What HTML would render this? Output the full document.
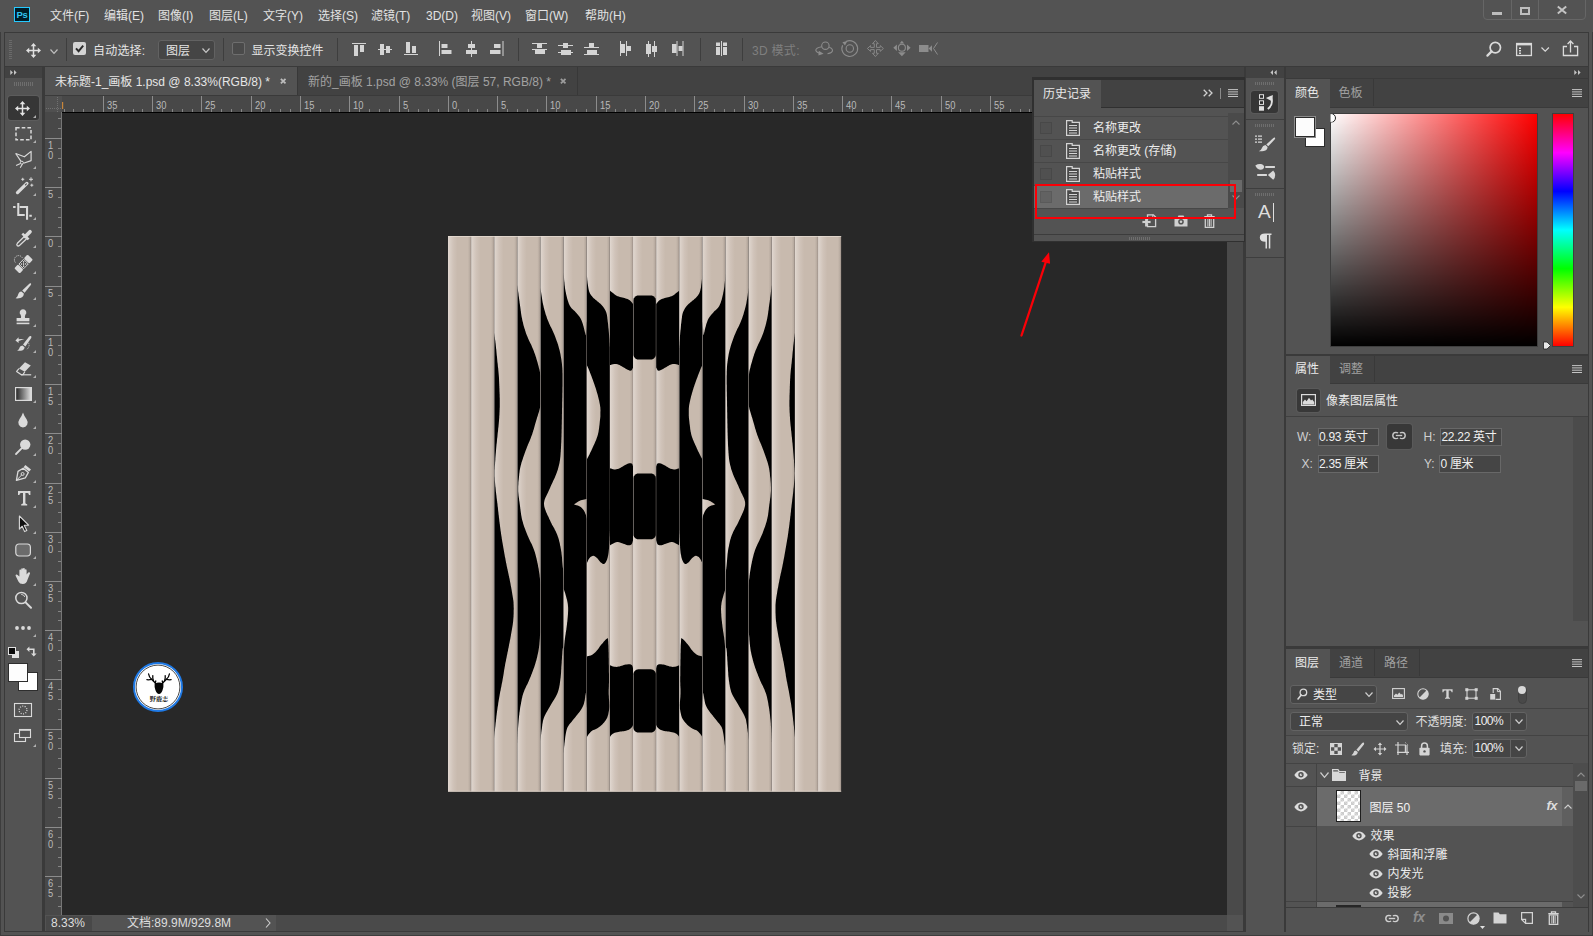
<!DOCTYPE html>
<html lang="zh-CN"><head><meta charset="utf-8"><title>Photoshop</title>
<style>
*{box-sizing:border-box;margin:0;padding:0}
html,body{width:1593px;height:936px;overflow:hidden}
body{position:relative;background:#3a3a3a;font-family:"Liberation Sans","Noto Sans CJK SC",sans-serif;font-size:12px;color:#dcdcdc;line-height:1}
.a{position:absolute}
.p{position:absolute;background:#535353}
.d{position:absolute;background:#424242}
.t{position:absolute;white-space:nowrap;line-height:16px;height:16px}
.dim{color:#9c9c9c}
svg{position:absolute;overflow:visible}
.ic{fill:#d6d6d6}
.st{fill:none;stroke:#d6d6d6;stroke-width:1.4}
</style></head>
<body>
<div class="p" style="left:0;top:0;width:1593px;height:936px;background:#535353"></div>
<div class="a" style="left:0;top:0;width:1px;height:936px;background:#3d3d3d"></div>
<div class="a" style="left:1592px;top:0;width:1px;height:936px;background:#3d3d3d"></div>
<div class="a" style="left:0;top:935px;width:1593px;height:1px;background:#3d3d3d"></div>
<svg style="left:0;top:0" width="6" height="6" viewBox="0 0 6 6"><path d="M0 0H5Q0 0 0 5Z" fill="#111"/></svg>
<svg style="left:1587px;top:0" width="6" height="6" viewBox="0 0 6 6"><path d="M6 0H1Q6 0 6 5Z" fill="#111"/></svg>
<div class="a" style="left:4.300px;top:32px;width:1584.700px;height:900.300px;background:#3a3a3a"></div>
<div class="a" id="menubar" style="left:0;top:0;width:1593px;height:32px;background:#535353"></div>
<div class="a" style="left:14px;top:7px;width:16px;height:15px;background:#001c26;border:1px solid #26c9ff;color:#31c5f0;font-size:9.5px;line-height:13px;text-align:center;font-weight:bold;letter-spacing:-0.3px">Ps</div>
<div class="t" style="left:50px;top:8px;color:#e2e2e2">文件(F)</div>
<div class="t" style="left:104px;top:8px;color:#e2e2e2">编辑(E)</div>
<div class="t" style="left:158px;top:8px;color:#e2e2e2">图像(I)</div>
<div class="t" style="left:209px;top:8px;color:#e2e2e2">图层(L)</div>
<div class="t" style="left:263px;top:8px;color:#e2e2e2">文字(Y)</div>
<div class="t" style="left:318px;top:8px;color:#e2e2e2">选择(S)</div>
<div class="t" style="left:371px;top:8px;color:#e2e2e2">滤镜(T)</div>
<div class="t" style="left:426px;top:8px;color:#e2e2e2">3D(D)</div>
<div class="t" style="left:471px;top:8px;color:#e2e2e2">视图(V)</div>
<div class="t" style="left:525px;top:8px;color:#e2e2e2">窗口(W)</div>
<div class="t" style="left:585px;top:8px;color:#e2e2e2">帮助(H)</div>
<div class="a" style="left:1483px;top:-4px;width:103px;height:24px;border:1px solid #666;border-radius:4px"></div>
<div class="a" style="left:1511px;top:0;width:1px;height:19px;background:#666"></div>
<div class="a" style="left:1538px;top:0;width:1px;height:19px;background:#666"></div>
<div class="a" style="left:1492px;top:12px;width:10px;height:3px;background:#bdbdbd"></div>
<div class="a" style="left:1520px;top:7px;width:10px;height:8px;border:2px solid #bdbdbd"></div>
<svg style="left:1557px;top:6px" width="10" height="8" viewBox="0 0 10 8"><path d="M0.8 0.5L9.2 7.5M9.2 0.5L0.8 7.5" stroke="#c4c4c4" stroke-width="2" fill="none"/></svg>
<div class="p" id="optbar" style="left:5px;top:33px;width:1583.300px;height:32.800px"></div>
<div class="a" style="left:9px;top:40px;width:3px;height:19px;background:repeating-linear-gradient(#6a6a6a 0 1px,transparent 1px 2px)"></div>
<svg style="left:26px;top:43px" width="15" height="15" viewBox="0 0 16 16"><path d="M8 0L11 3.4H8.8V7.2H12.6V5L16 8L12.6 11V8.8H8.8V12.6H11L8 16L5 12.6H7.2V8.8H3.4V11L0 8L3.4 5V7.2H7.2V3.4H5Z" fill="#e0e0e0"/></svg>
<svg style="left:49.5px;top:48.5px" width="8" height="5" viewBox="0 0 8 5"><path d="M0.5 0.5L4.0 4.3L7.5 0.5" stroke="#c0c0c0" stroke-width="1.2" fill="none"/></svg>
<div class="a" style="left:66px;top:38px;width:1px;height:23px;background:#3e3e3e"></div>
<div class="a" style="left:73px;top:42px;width:13px;height:13px;background:#d4d4d4;border-radius:2px"></div>
<svg style="left:73px;top:42px" width="13" height="13" viewBox="0 0 13 13"><path d="M3 6.3L5.6 9.2L10.2 3.6" stroke="#2a2a2a" stroke-width="1.9" fill="none"/></svg>
<div class="t" style="left:93px;top:43px;color:#e4e4e4;letter-spacing:0.2px">自动选择:</div>
<div class="a" style="left:157.500px;top:39.500px;width:57.500px;height:20.500px;background:#454545;border:1px solid #626262;border-radius:3px"></div>
<div class="t" style="left:166px;top:43px;color:#e4e4e4">图层</div>
<svg style="left:202px;top:48px" width="8" height="5" viewBox="0 0 8 5"><path d="M0.5 0.5L4.0 4.3L7.5 0.5" stroke="#c8c8c8" stroke-width="1.2" fill="none"/></svg>
<div class="a" style="left:223px;top:38px;width:1px;height:23px;background:#3e3e3e"></div>
<div class="a" style="left:232px;top:42px;width:13px;height:13px;background:#4a4a4a;border:1px solid #6e6e6e;border-radius:2px"></div>
<div class="t" style="left:251.500px;top:43px;color:#e4e4e4">显示变换控件</div>
<div class="a" style="left:337px;top:38px;width:1px;height:23px;background:#3e3e3e"></div>
<svg style="left:340px;top:33px" width="400" height="33" viewBox="0 0 400 33"><rect x="12" y="10" width="14" height="1" fill="#d4d4d4"/><rect x="14" y="12" width="4" height="11" fill="#d4d4d4"/><rect x="20" y="12" width="4" height="7" fill="#d4d4d4"/><rect x="38" y="16" width="14" height="1" fill="#d4d4d4"/><rect x="40" y="11" width="4" height="11" fill="#d4d4d4"/><rect x="46" y="13" width="4" height="7" fill="#d4d4d4"/><rect x="64" y="21" width="14" height="1" fill="#d4d4d4"/><rect x="66" y="9" width="4" height="11" fill="#d4d4d4"/><rect x="72" y="13" width="4" height="7" fill="#d4d4d4"/><rect x="99" y="8" width="1" height="15" fill="#d4d4d4"/><rect x="101.5" y="11" width="6" height="4" fill="#d4d4d4"/><rect x="101.5" y="17" width="10" height="4" fill="#d4d4d4"/><rect x="131" y="8" width="1" height="16" fill="#d4d4d4"/><rect x="128" y="11" width="7" height="4" fill="#d4d4d4"/><rect x="126" y="17" width="11" height="4" fill="#d4d4d4"/><rect x="162.5" y="8" width="1" height="15" fill="#d4d4d4"/><rect x="154" y="11" width="6.5" height="4" fill="#d4d4d4"/><rect x="150" y="17" width="10.5" height="4" fill="#d4d4d4"/><rect x="192" y="10" width="15" height="1" fill="#d4d4d4"/><rect x="197" y="11" width="5" height="4" fill="#d4d4d4"/><rect x="192" y="16" width="15" height="1" fill="#d4d4d4"/><rect x="195" y="17" width="10" height="4" fill="#d4d4d4"/><rect x="218" y="12" width="15" height="1" fill="#d4d4d4"/><rect x="223" y="10" width="5" height="5" fill="#d4d4d4"/><rect x="218" y="19" width="15" height="1" fill="#d4d4d4"/><rect x="221" y="17" width="10" height="5" fill="#d4d4d4"/><rect x="249" y="10" width="5" height="4" fill="#d4d4d4"/><rect x="244" y="14" width="15" height="1" fill="#d4d4d4"/><rect x="247" y="17" width="10" height="4" fill="#d4d4d4"/><rect x="244" y="21" width="15" height="1" fill="#d4d4d4"/><rect x="280" y="8" width="1" height="15" fill="#d4d4d4"/><rect x="281" y="11" width="4" height="9" fill="#d4d4d4"/><rect x="286" y="8" width="1" height="15" fill="#d4d4d4"/><rect x="287" y="13" width="4" height="5" fill="#d4d4d4"/><rect x="308" y="8" width="1" height="16" fill="#d4d4d4"/><rect x="306" y="11" width="5" height="10" fill="#d4d4d4"/><rect x="314" y="8" width="1" height="16" fill="#d4d4d4"/><rect x="312" y="13" width="5" height="6" fill="#d4d4d4"/><rect x="332" y="11" width="4.5" height="9" fill="#d4d4d4"/><rect x="336.5" y="8" width="1" height="15" fill="#d4d4d4"/><rect x="338.5" y="13" width="4" height="5" fill="#d4d4d4"/><rect x="342.5" y="8" width="1" height="15" fill="#d4d4d4"/><rect x="376" y="9.5" width="4" height="3.5" fill="#d4d4d4"/><rect x="376" y="14" width="4" height="8" fill="#d4d4d4"/><rect x="381" y="8" width="1" height="15" fill="#d4d4d4"/><rect x="383" y="9.5" width="4" height="3.5" fill="#d4d4d4"/><rect x="383" y="14" width="4" height="8" fill="#d4d4d4"/></svg>
<div class="a" style="left:518px;top:38px;width:1px;height:23px;background:#3e3e3e"></div>
<div class="a" style="left:699.500px;top:38px;width:1px;height:23px;background:#3e3e3e"></div>
<div class="a" style="left:742px;top:38px;width:1px;height:23px;background:#3e3e3e"></div>
<div class="t" style="left:752px;top:43px;color:#7f7f7f;letter-spacing:0.3px">3D 模式:</div>
<svg style="left:810px;top:38px" width="135" height="24" viewBox="0 0 135 24" fill="none" stroke="#8c8c8c" stroke-width="1.1"><circle cx="15.4" cy="7.7" r="3.7"/><path d="M17.500 15.700Q22.800 14.800 22.500 12Q22.200 10 19.200 9.200"/><path d="M11.700 8.800Q5.800 9.800 5.800 12.300Q6 14.200 9.500 15.200"/><path d="M8.800 12.800L13.600 15.800L8.400 17.400Z" fill="#8c8c8c" stroke="none"/><path d="M36 3.600A7.900 7.900 0 1 1 32.600 7.200"/><circle cx="39.800" cy="10.500" r="3.700"/><path d="M32.400 4.200L37.400 3L35 7.600Z" fill="#8c8c8c" stroke="none"/><path d="M65.400 2.500l2.900 3.200h-1.800v3.700h3.700v-1.800l3.200 2.900-3.200 2.900v-1.800h-3.700v3.700h1.800l-2.900 3.200-2.900-3.200h1.800v-3.700h-3.700v1.800l-3.200-2.900 3.200-2.900v1.800h3.700v-3.700h-1.800z" stroke-width="0.9"/><circle cx="91.900" cy="9.800" r="3.500"/><path d="M91.900 2.800l2.300 2.600h-4.600zM91.900 18.200l-3.800-4h7.600zM83.300 9.800l3.600-3.200v6.400zM100.600 9.800l-3.600-3.200v6.400z" fill="#8c8c8c" stroke="none"/><rect x="109" y="7" width="9.500" height="7" fill="#8c8c8c" stroke="none"/><path d="M118.500 10.500l3.500-3.200v6.400z" fill="#8c8c8c" stroke="none"/><path d="M127.500 4.500l-4 6 4 6" stroke-width="1"/></svg>
<svg style="left:1480px;top:36px" width="105" height="28" viewBox="0 0 105 28" fill="none" stroke="#dadada"><circle cx="15.3" cy="11.6" r="5.2" stroke-width="1.7"/><path d="M11.6 15.4L7.4 19.6" stroke-width="2.2" stroke-linecap="round"/><rect x="36.6" y="7.5" width="14.8" height="12" stroke-width="1.3"/><path d="M36.6 8.6h14.8" stroke-width="1.6"/><path d="M40 11.5v6.5" stroke-width="2" stroke-dasharray="1.5 1"/><path d="M61.5 11.5l3.7 3.6 3.7-3.6" stroke-width="1.2"/><path d="M87 10.5h-3.6v9h14.2v-9h-3.6" stroke-width="1.3"/><path d="M90.5 16.5V5.5M87.6 8l2.9-3 2.9 3" stroke-width="1.3"/></svg>
<div class="d" style="left:44.500px;top:67px;width:1199px;height:28px"></div>
<div class="p" style="left:44.500px;top:67px;width:252.500px;height:28px"></div>
<div class="t" style="left:55px;top:74px;color:#e6e6e6">未标题-1_画板 1.psd @ 8.33%(RGB/8) *</div>
<svg style="left:279.9px;top:77.9px" width="6.400" height="6.200" viewBox="0 0 8 8"><path d="M1 1L7 7M7 1L1 7" stroke="#bcbcbc" stroke-width="2.300" fill="none"/></svg>
<div class="a" style="left:297px;top:67px;width:1px;height:28px;background:#383838"></div>
<div class="t" style="left:308px;top:74px;color:#a2a2a2">新的_画板 1.psd @ 8.33% (图层 57, RGB/8) *</div>
<svg style="left:560.3px;top:77.9px" width="6.400" height="6.200" viewBox="0 0 8 8"><path d="M1 1L7 7M7 1L1 7" stroke="#9c9c9c" stroke-width="2.300" fill="none"/></svg>
<div class="a" style="left:577px;top:67px;width:1px;height:28px;background:#383838"></div>
<div class="a" style="left:45px;top:96px;width:1182px;height:16px;background:#484848"></div>
<div class="a" style="left:45px;top:96px;width:17px;height:819px;background:#484848;border-right:1px solid #757575"></div>
<div class="a" style="left:44.500px;top:96px;width:17.500px;height:16px;background:#505050"></div>
<svg style="left:0;top:0" width="1593" height="936" viewBox="0 0 1593 936"><rect x="64" y="109" width="1" height="3" fill="#858585"/><rect x="73" y="109" width="1" height="3" fill="#858585"/><rect x="83" y="109" width="1" height="3" fill="#858585"/><rect x="93" y="109" width="1" height="3" fill="#858585"/><rect x="103" y="96" width="1" height="16" fill="#8c8c8c"/><text x="107" y="109.200" font-size="10.300" textLength="10.4" lengthAdjust="spacingAndGlyphs" fill="#b9b9b9" font-family="Liberation Sans,sans-serif">35</text><rect x="113" y="109" width="1" height="3" fill="#858585"/><rect x="123" y="109" width="1" height="3" fill="#858585"/><rect x="133" y="109" width="1" height="3" fill="#858585"/><rect x="142" y="109" width="1" height="3" fill="#858585"/><rect x="152" y="96" width="1" height="16" fill="#8c8c8c"/><text x="156" y="109.200" font-size="10.300" textLength="10.4" lengthAdjust="spacingAndGlyphs" fill="#b9b9b9" font-family="Liberation Sans,sans-serif">30</text><rect x="162" y="109" width="1" height="3" fill="#858585"/><rect x="172" y="109" width="1" height="3" fill="#858585"/><rect x="182" y="109" width="1" height="3" fill="#858585"/><rect x="192" y="109" width="1" height="3" fill="#858585"/><rect x="201" y="96" width="1" height="16" fill="#8c8c8c"/><text x="205" y="109.200" font-size="10.300" textLength="10.4" lengthAdjust="spacingAndGlyphs" fill="#b9b9b9" font-family="Liberation Sans,sans-serif">25</text><rect x="211" y="109" width="1" height="3" fill="#858585"/><rect x="221" y="109" width="1" height="3" fill="#858585"/><rect x="231" y="109" width="1" height="3" fill="#858585"/><rect x="241" y="109" width="1" height="3" fill="#858585"/><rect x="251" y="96" width="1" height="16" fill="#8c8c8c"/><text x="255" y="109.200" font-size="10.300" textLength="10.4" lengthAdjust="spacingAndGlyphs" fill="#b9b9b9" font-family="Liberation Sans,sans-serif">20</text><rect x="261" y="109" width="1" height="3" fill="#858585"/><rect x="270" y="109" width="1" height="3" fill="#858585"/><rect x="280" y="109" width="1" height="3" fill="#858585"/><rect x="290" y="109" width="1" height="3" fill="#858585"/><rect x="300" y="96" width="1" height="16" fill="#8c8c8c"/><text x="304" y="109.200" font-size="10.300" textLength="10.4" lengthAdjust="spacingAndGlyphs" fill="#b9b9b9" font-family="Liberation Sans,sans-serif">15</text><rect x="310" y="109" width="1" height="3" fill="#858585"/><rect x="320" y="109" width="1" height="3" fill="#858585"/><rect x="330" y="109" width="1" height="3" fill="#858585"/><rect x="339" y="109" width="1" height="3" fill="#858585"/><rect x="349" y="96" width="1" height="16" fill="#8c8c8c"/><text x="353" y="109.200" font-size="10.300" textLength="10.4" lengthAdjust="spacingAndGlyphs" fill="#b9b9b9" font-family="Liberation Sans,sans-serif">10</text><rect x="359" y="109" width="1" height="3" fill="#858585"/><rect x="369" y="109" width="1" height="3" fill="#858585"/><rect x="379" y="109" width="1" height="3" fill="#858585"/><rect x="389" y="109" width="1" height="3" fill="#858585"/><rect x="399" y="96" width="1" height="16" fill="#8c8c8c"/><text x="403" y="109.200" font-size="10.300" textLength="5.2" lengthAdjust="spacingAndGlyphs" fill="#b9b9b9" font-family="Liberation Sans,sans-serif">5</text><rect x="408" y="109" width="1" height="3" fill="#858585"/><rect x="418" y="109" width="1" height="3" fill="#858585"/><rect x="428" y="109" width="1" height="3" fill="#858585"/><rect x="438" y="109" width="1" height="3" fill="#858585"/><rect x="448" y="96" width="1" height="16" fill="#8c8c8c"/><text x="452" y="109.200" font-size="10.300" textLength="5.2" lengthAdjust="spacingAndGlyphs" fill="#b9b9b9" font-family="Liberation Sans,sans-serif">0</text><rect x="458" y="109" width="1" height="3" fill="#858585"/><rect x="468" y="109" width="1" height="3" fill="#858585"/><rect x="477" y="109" width="1" height="3" fill="#858585"/><rect x="487" y="109" width="1" height="3" fill="#858585"/><rect x="497" y="96" width="1" height="16" fill="#8c8c8c"/><text x="501" y="109.200" font-size="10.300" textLength="5.2" lengthAdjust="spacingAndGlyphs" fill="#b9b9b9" font-family="Liberation Sans,sans-serif">5</text><rect x="507" y="109" width="1" height="3" fill="#858585"/><rect x="517" y="109" width="1" height="3" fill="#858585"/><rect x="527" y="109" width="1" height="3" fill="#858585"/><rect x="537" y="109" width="1" height="3" fill="#858585"/><rect x="546" y="96" width="1" height="16" fill="#8c8c8c"/><text x="550" y="109.200" font-size="10.300" textLength="10.4" lengthAdjust="spacingAndGlyphs" fill="#b9b9b9" font-family="Liberation Sans,sans-serif">10</text><rect x="556" y="109" width="1" height="3" fill="#858585"/><rect x="566" y="109" width="1" height="3" fill="#858585"/><rect x="576" y="109" width="1" height="3" fill="#858585"/><rect x="586" y="109" width="1" height="3" fill="#858585"/><rect x="596" y="96" width="1" height="16" fill="#8c8c8c"/><text x="600" y="109.200" font-size="10.300" textLength="10.4" lengthAdjust="spacingAndGlyphs" fill="#b9b9b9" font-family="Liberation Sans,sans-serif">15</text><rect x="606" y="109" width="1" height="3" fill="#858585"/><rect x="615" y="109" width="1" height="3" fill="#858585"/><rect x="625" y="109" width="1" height="3" fill="#858585"/><rect x="635" y="109" width="1" height="3" fill="#858585"/><rect x="645" y="96" width="1" height="16" fill="#8c8c8c"/><text x="649" y="109.200" font-size="10.300" textLength="10.4" lengthAdjust="spacingAndGlyphs" fill="#b9b9b9" font-family="Liberation Sans,sans-serif">20</text><rect x="655" y="109" width="1" height="3" fill="#858585"/><rect x="665" y="109" width="1" height="3" fill="#858585"/><rect x="675" y="109" width="1" height="3" fill="#858585"/><rect x="684" y="109" width="1" height="3" fill="#858585"/><rect x="694" y="96" width="1" height="16" fill="#8c8c8c"/><text x="698" y="109.200" font-size="10.300" textLength="10.4" lengthAdjust="spacingAndGlyphs" fill="#b9b9b9" font-family="Liberation Sans,sans-serif">25</text><rect x="704" y="109" width="1" height="3" fill="#858585"/><rect x="714" y="109" width="1" height="3" fill="#858585"/><rect x="724" y="109" width="1" height="3" fill="#858585"/><rect x="734" y="109" width="1" height="3" fill="#858585"/><rect x="744" y="96" width="1" height="16" fill="#8c8c8c"/><text x="748" y="109.200" font-size="10.300" textLength="10.4" lengthAdjust="spacingAndGlyphs" fill="#b9b9b9" font-family="Liberation Sans,sans-serif">30</text><rect x="753" y="109" width="1" height="3" fill="#858585"/><rect x="763" y="109" width="1" height="3" fill="#858585"/><rect x="773" y="109" width="1" height="3" fill="#858585"/><rect x="783" y="109" width="1" height="3" fill="#858585"/><rect x="793" y="96" width="1" height="16" fill="#8c8c8c"/><text x="797" y="109.200" font-size="10.300" textLength="10.4" lengthAdjust="spacingAndGlyphs" fill="#b9b9b9" font-family="Liberation Sans,sans-serif">35</text><rect x="803" y="109" width="1" height="3" fill="#858585"/><rect x="813" y="109" width="1" height="3" fill="#858585"/><rect x="822" y="109" width="1" height="3" fill="#858585"/><rect x="832" y="109" width="1" height="3" fill="#858585"/><rect x="842" y="96" width="1" height="16" fill="#8c8c8c"/><text x="846" y="109.200" font-size="10.300" textLength="10.4" lengthAdjust="spacingAndGlyphs" fill="#b9b9b9" font-family="Liberation Sans,sans-serif">40</text><rect x="852" y="109" width="1" height="3" fill="#858585"/><rect x="862" y="109" width="1" height="3" fill="#858585"/><rect x="872" y="109" width="1" height="3" fill="#858585"/><rect x="882" y="109" width="1" height="3" fill="#858585"/><rect x="891" y="96" width="1" height="16" fill="#8c8c8c"/><text x="895" y="109.200" font-size="10.300" textLength="10.4" lengthAdjust="spacingAndGlyphs" fill="#b9b9b9" font-family="Liberation Sans,sans-serif">45</text><rect x="901" y="109" width="1" height="3" fill="#858585"/><rect x="911" y="109" width="1" height="3" fill="#858585"/><rect x="921" y="109" width="1" height="3" fill="#858585"/><rect x="931" y="109" width="1" height="3" fill="#858585"/><rect x="941" y="96" width="1" height="16" fill="#8c8c8c"/><text x="945" y="109.200" font-size="10.300" textLength="10.4" lengthAdjust="spacingAndGlyphs" fill="#b9b9b9" font-family="Liberation Sans,sans-serif">50</text><rect x="951" y="109" width="1" height="3" fill="#858585"/><rect x="960" y="109" width="1" height="3" fill="#858585"/><rect x="970" y="109" width="1" height="3" fill="#858585"/><rect x="980" y="109" width="1" height="3" fill="#858585"/><rect x="990" y="96" width="1" height="16" fill="#8c8c8c"/><text x="994" y="109.200" font-size="10.300" textLength="10.4" lengthAdjust="spacingAndGlyphs" fill="#b9b9b9" font-family="Liberation Sans,sans-serif">55</text><rect x="1000" y="109" width="1" height="3" fill="#858585"/><rect x="1010" y="109" width="1" height="3" fill="#858585"/><rect x="1020" y="109" width="1" height="3" fill="#858585"/><rect x="1029" y="109" width="1" height="3" fill="#858585"/><rect x="1039" y="96" width="1" height="16" fill="#8c8c8c"/><text x="1043" y="109.200" font-size="10.300" textLength="10.4" lengthAdjust="spacingAndGlyphs" fill="#b9b9b9" font-family="Liberation Sans,sans-serif">60</text><rect x="1049" y="109" width="1" height="3" fill="#858585"/><rect x="1059" y="109" width="1" height="3" fill="#858585"/><rect x="1069" y="109" width="1" height="3" fill="#858585"/><rect x="1079" y="109" width="1" height="3" fill="#858585"/><rect x="1089" y="96" width="1" height="16" fill="#8c8c8c"/><text x="1093" y="109.200" font-size="10.300" textLength="10.4" lengthAdjust="spacingAndGlyphs" fill="#b9b9b9" font-family="Liberation Sans,sans-serif">65</text><rect x="1098" y="109" width="1" height="3" fill="#858585"/><rect x="1108" y="109" width="1" height="3" fill="#858585"/><rect x="1118" y="109" width="1" height="3" fill="#858585"/><rect x="1128" y="109" width="1" height="3" fill="#858585"/><rect x="1138" y="96" width="1" height="16" fill="#8c8c8c"/><text x="1142" y="109.200" font-size="10.300" textLength="10.4" lengthAdjust="spacingAndGlyphs" fill="#b9b9b9" font-family="Liberation Sans,sans-serif">70</text><rect x="1148" y="109" width="1" height="3" fill="#858585"/><rect x="1158" y="109" width="1" height="3" fill="#858585"/><rect x="1167" y="109" width="1" height="3" fill="#858585"/><rect x="1177" y="109" width="1" height="3" fill="#858585"/><rect x="1187" y="96" width="1" height="16" fill="#8c8c8c"/><text x="1191" y="109.200" font-size="10.300" textLength="10.4" lengthAdjust="spacingAndGlyphs" fill="#b9b9b9" font-family="Liberation Sans,sans-serif">75</text><rect x="1197" y="109" width="1" height="3" fill="#858585"/><rect x="1207" y="109" width="1" height="3" fill="#858585"/><rect x="1217" y="109" width="1" height="3" fill="#858585"/><rect x="58" y="118" width="3" height="1" fill="#858585"/><rect x="58" y="128" width="3" height="1" fill="#858585"/><rect x="45" y="138" width="17" height="1" fill="#8c8c8c"/><text x="48" y="149.2" font-size="10.300" textLength="5.200" lengthAdjust="spacingAndGlyphs" fill="#b9b9b9" font-family="Liberation Sans,sans-serif">1</text><text x="48" y="159.2" font-size="10.300" textLength="5.200" lengthAdjust="spacingAndGlyphs" fill="#b9b9b9" font-family="Liberation Sans,sans-serif">0</text><rect x="58" y="148" width="3" height="1" fill="#858585"/><rect x="58" y="158" width="3" height="1" fill="#858585"/><rect x="58" y="167" width="3" height="1" fill="#858585"/><rect x="58" y="177" width="3" height="1" fill="#858585"/><rect x="45" y="187" width="17" height="1" fill="#8c8c8c"/><text x="48" y="198.2" font-size="10.300" textLength="5.200" lengthAdjust="spacingAndGlyphs" fill="#b9b9b9" font-family="Liberation Sans,sans-serif">5</text><rect x="58" y="197" width="3" height="1" fill="#858585"/><rect x="58" y="207" width="3" height="1" fill="#858585"/><rect x="58" y="217" width="3" height="1" fill="#858585"/><rect x="58" y="227" width="3" height="1" fill="#858585"/><rect x="45" y="236" width="17" height="1" fill="#8c8c8c"/><text x="48" y="247.2" font-size="10.300" textLength="5.200" lengthAdjust="spacingAndGlyphs" fill="#b9b9b9" font-family="Liberation Sans,sans-serif">0</text><rect x="58" y="246" width="3" height="1" fill="#858585"/><rect x="58" y="256" width="3" height="1" fill="#858585"/><rect x="58" y="266" width="3" height="1" fill="#858585"/><rect x="58" y="276" width="3" height="1" fill="#858585"/><rect x="45" y="286" width="17" height="1" fill="#8c8c8c"/><text x="48" y="297.2" font-size="10.300" textLength="5.200" lengthAdjust="spacingAndGlyphs" fill="#b9b9b9" font-family="Liberation Sans,sans-serif">5</text><rect x="58" y="295" width="3" height="1" fill="#858585"/><rect x="58" y="305" width="3" height="1" fill="#858585"/><rect x="58" y="315" width="3" height="1" fill="#858585"/><rect x="58" y="325" width="3" height="1" fill="#858585"/><rect x="45" y="335" width="17" height="1" fill="#8c8c8c"/><text x="48" y="346.2" font-size="10.300" textLength="5.200" lengthAdjust="spacingAndGlyphs" fill="#b9b9b9" font-family="Liberation Sans,sans-serif">1</text><text x="48" y="356.2" font-size="10.300" textLength="5.200" lengthAdjust="spacingAndGlyphs" fill="#b9b9b9" font-family="Liberation Sans,sans-serif">0</text><rect x="58" y="345" width="3" height="1" fill="#858585"/><rect x="58" y="355" width="3" height="1" fill="#858585"/><rect x="58" y="364" width="3" height="1" fill="#858585"/><rect x="58" y="374" width="3" height="1" fill="#858585"/><rect x="45" y="384" width="17" height="1" fill="#8c8c8c"/><text x="48" y="395.2" font-size="10.300" textLength="5.200" lengthAdjust="spacingAndGlyphs" fill="#b9b9b9" font-family="Liberation Sans,sans-serif">1</text><text x="48" y="405.2" font-size="10.300" textLength="5.200" lengthAdjust="spacingAndGlyphs" fill="#b9b9b9" font-family="Liberation Sans,sans-serif">5</text><rect x="58" y="394" width="3" height="1" fill="#858585"/><rect x="58" y="404" width="3" height="1" fill="#858585"/><rect x="58" y="414" width="3" height="1" fill="#858585"/><rect x="58" y="423" width="3" height="1" fill="#858585"/><rect x="45" y="433" width="17" height="1" fill="#8c8c8c"/><text x="48" y="444.2" font-size="10.300" textLength="5.200" lengthAdjust="spacingAndGlyphs" fill="#b9b9b9" font-family="Liberation Sans,sans-serif">2</text><text x="48" y="454.2" font-size="10.300" textLength="5.200" lengthAdjust="spacingAndGlyphs" fill="#b9b9b9" font-family="Liberation Sans,sans-serif">0</text><rect x="58" y="443" width="3" height="1" fill="#858585"/><rect x="58" y="453" width="3" height="1" fill="#858585"/><rect x="58" y="463" width="3" height="1" fill="#858585"/><rect x="58" y="473" width="3" height="1" fill="#858585"/><rect x="45" y="483" width="17" height="1" fill="#8c8c8c"/><text x="48" y="494.2" font-size="10.300" textLength="5.200" lengthAdjust="spacingAndGlyphs" fill="#b9b9b9" font-family="Liberation Sans,sans-serif">2</text><text x="48" y="504.2" font-size="10.300" textLength="5.200" lengthAdjust="spacingAndGlyphs" fill="#b9b9b9" font-family="Liberation Sans,sans-serif">5</text><rect x="58" y="492" width="3" height="1" fill="#858585"/><rect x="58" y="502" width="3" height="1" fill="#858585"/><rect x="58" y="512" width="3" height="1" fill="#858585"/><rect x="58" y="522" width="3" height="1" fill="#858585"/><rect x="45" y="532" width="17" height="1" fill="#8c8c8c"/><text x="48" y="543.2" font-size="10.300" textLength="5.200" lengthAdjust="spacingAndGlyphs" fill="#b9b9b9" font-family="Liberation Sans,sans-serif">3</text><text x="48" y="553.2" font-size="10.300" textLength="5.200" lengthAdjust="spacingAndGlyphs" fill="#b9b9b9" font-family="Liberation Sans,sans-serif">0</text><rect x="58" y="542" width="3" height="1" fill="#858585"/><rect x="58" y="551" width="3" height="1" fill="#858585"/><rect x="58" y="561" width="3" height="1" fill="#858585"/><rect x="58" y="571" width="3" height="1" fill="#858585"/><rect x="45" y="581" width="17" height="1" fill="#8c8c8c"/><text x="48" y="592.2" font-size="10.300" textLength="5.200" lengthAdjust="spacingAndGlyphs" fill="#b9b9b9" font-family="Liberation Sans,sans-serif">3</text><text x="48" y="602.2" font-size="10.300" textLength="5.200" lengthAdjust="spacingAndGlyphs" fill="#b9b9b9" font-family="Liberation Sans,sans-serif">5</text><rect x="58" y="591" width="3" height="1" fill="#858585"/><rect x="58" y="601" width="3" height="1" fill="#858585"/><rect x="58" y="611" width="3" height="1" fill="#858585"/><rect x="58" y="620" width="3" height="1" fill="#858585"/><rect x="45" y="630" width="17" height="1" fill="#8c8c8c"/><text x="48" y="641.2" font-size="10.300" textLength="5.200" lengthAdjust="spacingAndGlyphs" fill="#b9b9b9" font-family="Liberation Sans,sans-serif">4</text><text x="48" y="651.2" font-size="10.300" textLength="5.200" lengthAdjust="spacingAndGlyphs" fill="#b9b9b9" font-family="Liberation Sans,sans-serif">0</text><rect x="58" y="640" width="3" height="1" fill="#858585"/><rect x="58" y="650" width="3" height="1" fill="#858585"/><rect x="58" y="660" width="3" height="1" fill="#858585"/><rect x="58" y="670" width="3" height="1" fill="#858585"/><rect x="45" y="679" width="17" height="1" fill="#8c8c8c"/><text x="48" y="690.2" font-size="10.300" textLength="5.200" lengthAdjust="spacingAndGlyphs" fill="#b9b9b9" font-family="Liberation Sans,sans-serif">4</text><text x="48" y="700.2" font-size="10.300" textLength="5.200" lengthAdjust="spacingAndGlyphs" fill="#b9b9b9" font-family="Liberation Sans,sans-serif">5</text><rect x="58" y="689" width="3" height="1" fill="#858585"/><rect x="58" y="699" width="3" height="1" fill="#858585"/><rect x="58" y="709" width="3" height="1" fill="#858585"/><rect x="58" y="719" width="3" height="1" fill="#858585"/><rect x="45" y="729" width="17" height="1" fill="#8c8c8c"/><text x="48" y="740.2" font-size="10.300" textLength="5.200" lengthAdjust="spacingAndGlyphs" fill="#b9b9b9" font-family="Liberation Sans,sans-serif">5</text><text x="48" y="750.2" font-size="10.300" textLength="5.200" lengthAdjust="spacingAndGlyphs" fill="#b9b9b9" font-family="Liberation Sans,sans-serif">0</text><rect x="58" y="738" width="3" height="1" fill="#858585"/><rect x="58" y="748" width="3" height="1" fill="#858585"/><rect x="58" y="758" width="3" height="1" fill="#858585"/><rect x="58" y="768" width="3" height="1" fill="#858585"/><rect x="45" y="778" width="17" height="1" fill="#8c8c8c"/><text x="48" y="789.2" font-size="10.300" textLength="5.200" lengthAdjust="spacingAndGlyphs" fill="#b9b9b9" font-family="Liberation Sans,sans-serif">5</text><text x="48" y="799.2" font-size="10.300" textLength="5.200" lengthAdjust="spacingAndGlyphs" fill="#b9b9b9" font-family="Liberation Sans,sans-serif">5</text><rect x="58" y="788" width="3" height="1" fill="#858585"/><rect x="58" y="798" width="3" height="1" fill="#858585"/><rect x="58" y="807" width="3" height="1" fill="#858585"/><rect x="58" y="817" width="3" height="1" fill="#858585"/><rect x="45" y="827" width="17" height="1" fill="#8c8c8c"/><text x="48" y="838.2" font-size="10.300" textLength="5.200" lengthAdjust="spacingAndGlyphs" fill="#b9b9b9" font-family="Liberation Sans,sans-serif">6</text><text x="48" y="848.2" font-size="10.300" textLength="5.200" lengthAdjust="spacingAndGlyphs" fill="#b9b9b9" font-family="Liberation Sans,sans-serif">0</text><rect x="58" y="837" width="3" height="1" fill="#858585"/><rect x="58" y="847" width="3" height="1" fill="#858585"/><rect x="58" y="857" width="3" height="1" fill="#858585"/><rect x="58" y="866" width="3" height="1" fill="#858585"/><rect x="45" y="876" width="17" height="1" fill="#8c8c8c"/><text x="48" y="887.2" font-size="10.300" textLength="5.200" lengthAdjust="spacingAndGlyphs" fill="#b9b9b9" font-family="Liberation Sans,sans-serif">6</text><text x="48" y="897.2" font-size="10.300" textLength="5.200" lengthAdjust="spacingAndGlyphs" fill="#b9b9b9" font-family="Liberation Sans,sans-serif">5</text><rect x="58" y="886" width="3" height="1" fill="#858585"/><rect x="58" y="896" width="3" height="1" fill="#858585"/><rect x="58" y="906" width="3" height="1" fill="#858585"/><path d="M46 108.5H61M57.500 97V112" stroke="#707070" stroke-width="1" stroke-dasharray="1 1" fill="none"/><rect x="62" y="102" width="1.2" height="7" fill="#c8853a"/></svg>
<div class="a" style="left:62px;top:112px;width:1165px;height:803px;background:#282828;border-top:1px solid #000"></div>
<div class="a" style="left:1227px;top:96px;width:16px;height:819px;background:#4a4a4a"></div>
<div class="a" style="left:45px;top:915px;width:1182px;height:16px;background:#4a4a4a"></div>
<div class="p" style="left:1227px;top:915px;width:16px;height:16px"></div>
<div class="p" style="left:45px;top:915px;width:231px;height:16px"></div>
<div class="a" style="left:46px;top:916px;width:46px;height:15px;background:#484848"></div>
<div class="t" style="left:51px;top:915px;color:#dedede">8.33%</div>
<div class="t" style="left:127px;top:915px;color:#dedede">文档:89.9M/929.8M</div>
<svg style="left:265px;top:918px" width="6" height="10" viewBox="0 0 6 10"><path d="M1 0.5L5 5L1 9.5" stroke="#cfcfcf" stroke-width="1.1" fill="none"/></svg>
<svg style="left:133px;top:662px" width="50" height="50" viewBox="0 0 50 50"><circle cx="25" cy="25" r="24" fill="#fff" stroke="#1f7ae6" stroke-width="2"/><circle cx="25" cy="25" r="21.900" fill="none" stroke="#1a1a1a" stroke-width="0.800"/><g fill="none" stroke="#050505" stroke-width="1.300" stroke-linecap="round"><path d="M22.800 21.600Q20 18.500 18.600 17.200Q16 15 15.600 12"/><path d="M18.800 17.400Q16 18 13.900 17.700"/><path d="M20.500 18.900Q19.400 16.400 19.800 13.600"/><path d="M22.300 21Q22.200 19.800 22.800 19"/><path d="M29.200 21.600Q32 18.500 33.400 17.200Q36 15 36.400 12"/><path d="M33.200 17.400Q36 18 38.100 17.700"/><path d="M31.500 18.900Q32.600 16.400 32.200 13.600"/><path d="M29.700 21Q29.800 19.800 29.200 19"/></g><path d="M21.600 21.800Q23.600 20.600 26 20.600Q28.400 20.600 30.400 21.800Q30.800 24.500 29.600 28Q28.200 31.900 26 31.900Q23.800 31.900 22.400 28Q21.200 24.500 21.600 21.800Z" fill="#050505"/><text x="26" y="39.300" font-size="6.200" text-anchor="middle" fill="#111" font-weight="700" font-family="'Liberation Serif','Noto Serif CJK SC',serif">野鹿志</text></svg>
<svg class="art" width="393.2" height="555.8" viewBox="0 0 393.2 555.8" style="position:absolute;left:447.9px;top:236.0px">
<defs>
<linearGradient id="sg" gradientUnits="userSpaceOnUse" x1="0" y1="0" x2="23.13" y2="0"><stop offset="0" stop-color="#e3dad3"/><stop offset="0.04" stop-color="#ddd3cb"/><stop offset="0.22" stop-color="#d0c3b9"/><stop offset="0.40" stop-color="#c8baae"/><stop offset="0.86" stop-color="#c8baae"/><stop offset="0.94" stop-color="#b9aca1"/><stop offset="1" stop-color="#9d9088"/></linearGradient>
<clipPath id="sc"><rect x="0" y="0" width="23.13" height="555.8"/></clipPath>
</defs>
<g transform="translate(0.00,0)" clip-path="url(#sc)">
<rect x="-0.5" y="0" width="24.13" height="555.8" fill="url(#sg)"/>
</g>
<g transform="translate(23.13,0)" clip-path="url(#sc)">
<rect x="-0.5" y="0" width="24.13" height="555.8" fill="url(#sg)"/>
</g>
<g transform="translate(46.26,0)" clip-path="url(#sc)">
<rect x="-0.5" y="0" width="24.13" height="555.8" fill="url(#sg)"/>
<polygon points="0.0,97.0 0.0,97.0 0.1,97.6 0.2,98.4 0.3,99.3 0.4,100.4 0.6,101.5 0.7,102.7 0.9,103.9 1.1,105.2 1.2,106.5 1.4,107.8 1.5,109.0 1.6,110.1 1.7,111.1 1.8,112.3 2.0,113.4 2.1,114.6 2.2,115.7 2.3,116.9 2.4,118.1 2.5,119.3 2.7,120.5 2.8,121.7 2.9,122.8 3.0,124.0 3.1,125.2 3.2,126.3 3.4,127.5 3.5,128.6 3.6,129.8 3.7,130.9 3.9,132.1 4.0,133.2 4.1,134.4 4.2,135.5 4.3,136.7 4.4,137.8 4.5,139.0 4.6,140.2 4.7,141.3 4.7,142.5 4.8,143.6 4.8,144.8 4.9,145.9 4.9,147.1 5.0,148.2 5.0,149.4 5.1,150.5 5.1,151.7 5.2,152.8 5.2,154.0 5.2,155.2 5.3,156.3 5.3,157.5 5.4,158.6 5.4,159.8 5.4,160.9 5.5,162.1 5.5,163.2 5.5,164.4 5.5,165.5 5.5,166.7 5.5,167.8 5.5,169.0 5.5,170.2 5.5,171.3 5.4,172.5 5.4,173.6 5.3,174.8 5.3,175.9 5.2,177.1 5.2,178.2 5.1,179.4 5.0,180.5 5.0,181.7 4.9,182.8 4.8,184.0 4.7,185.2 4.6,186.3 4.5,187.5 4.4,188.6 4.3,189.8 4.2,190.9 4.0,192.1 3.9,193.2 3.8,194.4 3.7,195.5 3.5,196.7 3.4,197.8 3.3,199.0 3.2,200.2 3.1,201.3 2.9,202.5 2.8,203.6 2.7,204.8 2.6,205.9 2.5,207.1 2.3,208.2 2.2,209.4 2.1,210.5 2.0,211.7 1.9,212.8 1.8,214.0 1.7,215.2 1.6,216.4 1.5,217.6 1.4,218.8 1.3,220.0 1.2,221.2 1.1,222.4 1.1,223.6 1.0,224.8 0.9,225.9 0.8,227.0 0.8,228.0 0.7,229.0 0.6,230.3 0.5,231.5 0.5,232.5 0.4,233.5 0.3,234.5 0.3,235.5 0.3,236.5 0.3,237.7 0.3,239.0 0.3,240.0 0.4,241.0 0.5,242.1 0.5,243.2 0.6,244.4 0.7,245.6 0.8,246.8 0.9,248.0 1.0,249.2 1.1,250.4 1.3,251.6 1.4,252.8 1.5,254.0 1.6,255.2 1.7,256.3 1.9,257.5 2.0,258.6 2.2,259.8 2.3,260.9 2.4,262.1 2.6,263.2 2.7,264.4 2.9,265.5 3.0,266.7 3.2,267.8 3.3,269.0 3.4,270.2 3.6,271.3 3.7,272.5 3.8,273.6 3.9,274.8 4.1,275.9 4.2,277.1 4.3,278.2 4.5,279.4 4.6,280.5 4.7,281.7 4.9,282.8 5.0,284.0 5.1,285.2 5.3,286.3 5.4,287.5 5.6,288.6 5.7,289.8 5.9,290.9 6.0,292.1 6.2,293.2 6.3,294.4 6.5,295.5 6.7,296.7 6.8,297.8 7.0,299.0 7.2,300.2 7.4,301.3 7.5,302.5 7.7,303.6 7.9,304.8 8.1,305.9 8.3,307.1 8.5,308.2 8.7,309.4 8.9,310.5 9.1,311.7 9.3,312.8 9.5,314.0 9.7,315.2 9.9,316.3 10.1,317.5 10.3,318.6 10.5,319.8 10.7,320.9 11.0,322.1 11.2,323.2 11.4,324.4 11.6,325.5 11.8,326.7 12.1,327.8 12.3,329.0 12.5,330.2 12.8,331.3 13.0,332.5 13.3,333.6 13.5,334.8 13.8,335.9 14.0,337.1 14.3,338.2 14.5,339.4 14.8,340.5 15.0,341.7 15.3,342.8 15.5,344.0 15.7,345.2 16.0,346.4 16.2,347.6 16.4,348.8 16.6,350.0 16.9,351.2 17.1,352.4 17.3,353.6 17.5,354.8 17.7,355.9 17.9,357.0 18.0,358.0 18.2,359.0 18.4,360.3 18.6,361.5 18.8,362.5 18.9,363.5 19.1,364.5 19.2,365.5 19.3,366.5 19.3,367.7 19.4,369.0 19.4,370.0 19.4,371.0 19.5,372.1 19.5,373.2 19.4,374.4 19.4,375.6 19.4,376.8 19.4,378.0 19.3,379.2 19.3,380.4 19.2,381.6 19.1,382.8 19.0,384.0 18.9,385.2 18.8,386.3 18.6,387.5 18.5,388.6 18.3,389.8 18.1,390.9 17.9,392.1 17.7,393.2 17.5,394.4 17.3,395.5 17.1,396.7 16.9,397.8 16.7,399.0 16.5,400.2 16.3,401.3 16.1,402.5 15.9,403.6 15.6,404.8 15.4,405.9 15.2,407.1 14.9,408.2 14.7,409.4 14.5,410.5 14.3,411.7 14.0,412.8 13.8,414.0 13.6,415.2 13.3,416.3 13.1,417.5 12.9,418.6 12.6,419.8 12.4,420.9 12.2,422.1 11.9,423.2 11.7,424.4 11.5,425.5 11.2,426.7 11.0,427.8 10.8,429.0 10.6,430.2 10.4,431.3 10.2,432.5 10.0,433.6 9.8,434.8 9.6,435.9 9.5,437.1 9.3,438.2 9.1,439.4 8.9,440.5 8.7,441.7 8.5,442.8 8.3,444.0 8.1,445.2 7.9,446.3 7.6,447.5 7.4,448.6 7.2,449.8 7.0,450.9 6.7,452.1 6.5,453.2 6.3,454.4 6.0,455.5 5.8,456.7 5.6,457.8 5.4,459.0 5.2,460.2 5.0,461.3 4.8,462.5 4.6,463.6 4.4,464.8 4.2,465.9 4.0,467.1 3.9,468.2 3.7,469.4 3.5,470.5 3.3,471.7 3.2,472.8 3.0,474.0 2.8,475.2 2.7,476.3 2.5,477.5 2.4,478.7 2.2,479.9 2.1,481.0 2.0,482.2 1.8,483.4 1.7,484.5 1.6,485.7 1.4,486.8 1.3,487.9 1.2,489.0 1.1,490.3 0.9,491.7 0.8,493.0 0.7,494.4 0.5,495.8 0.4,497.1 0.3,498.3 0.2,499.4 0.1,500.5 0.1,501.3 0.0,502.0 0.0,502.0" fill="#000"/>
</g>
<g transform="translate(69.39,0)" clip-path="url(#sc)">
<rect x="-0.5" y="0" width="24.13" height="555.8" fill="url(#sg)"/>
<polygon points="0.0,49.0 0.0,49.0 0.1,49.7 0.2,50.6 0.3,51.6 0.4,52.8 0.6,54.0 0.7,55.3 0.9,56.6 1.1,57.8 1.2,59.0 1.3,60.1 1.5,61.1 1.6,62.1 1.8,63.2 1.9,64.2 2.1,65.3 2.2,66.4 2.4,67.7 2.6,69.0 2.7,70.0 2.9,71.0 3.0,72.1 3.2,73.2 3.3,74.4 3.5,75.6 3.6,76.8 3.8,78.0 4.0,79.2 4.2,80.4 4.4,81.6 4.7,82.8 4.9,84.0 5.1,85.1 5.4,86.1 5.7,87.2 5.9,88.3 6.2,89.4 6.5,90.4 6.8,91.5 7.1,92.6 7.5,93.6 7.8,94.7 8.2,95.8 8.5,96.9 8.9,97.9 9.3,99.0 9.7,100.1 10.2,101.1 10.6,102.2 11.1,103.3 11.6,104.4 12.1,105.4 12.6,106.5 13.1,107.6 13.7,108.6 14.2,109.7 14.6,110.8 15.1,111.9 15.6,112.9 16.0,114.0 16.4,115.1 16.8,116.2 17.2,117.3 17.6,118.3 18.0,119.4 18.3,120.5 18.7,121.6 19.0,122.7 19.3,123.8 19.7,124.9 20.0,125.9 20.3,127.0 20.5,128.0 20.8,129.0 21.1,130.1 21.4,131.2 21.6,132.2 21.9,133.1 22.1,134.1 22.3,135.1 22.5,136.0 22.7,137.1 22.8,138.2 23.0,139.3 23.1,140.6 23.1,142.0 23.1,143.0 23.1,144.0 23.1,145.1 23.1,146.3 23.1,147.5 23.1,148.8 23.1,150.0 23.1,151.3 23.1,152.7 23.1,154.0 23.1,155.3 23.1,156.5 23.1,157.8 23.1,159.0 23.1,160.1 23.1,161.2 23.1,162.2 23.1,163.2 23.1,164.0 23.1,165.8 23.1,167.2 23.1,168.2 23.0,169.0 22.9,169.8 22.8,170.8 22.5,172.0 22.3,172.9 22.0,173.9 21.8,174.9 21.5,175.9 21.2,177.0 20.8,178.1 20.5,179.2 20.1,180.4 19.7,181.6 19.4,182.8 19.0,184.0 18.7,185.0 18.4,186.0 18.1,187.0 17.8,188.1 17.5,189.1 17.2,190.2 16.9,191.3 16.6,192.4 16.3,193.5 15.9,194.6 15.6,195.7 15.2,196.8 14.9,197.9 14.5,199.0 14.1,200.1 13.7,201.1 13.3,202.2 12.9,203.3 12.4,204.4 12.0,205.4 11.5,206.5 11.1,207.6 10.6,208.6 10.2,209.7 9.7,210.8 9.3,211.9 8.9,212.9 8.5,214.0 8.1,215.1 7.7,216.2 7.3,217.3 6.9,218.4 6.5,219.6 6.1,220.7 5.7,221.8 5.4,222.9 5.0,224.0 4.7,225.1 4.3,226.1 4.0,227.1 3.8,228.1 3.5,229.0 3.2,230.3 2.9,231.5 2.7,232.5 2.5,233.5 2.3,234.5 2.2,235.5 2.1,236.5 1.9,237.7 1.8,239.0 1.7,240.0 1.6,241.0 1.5,242.1 1.4,243.2 1.2,244.4 1.1,245.6 1.0,246.8 1.0,248.0 0.9,249.2 0.8,250.4 0.8,251.6 0.8,252.8 0.8,254.0 0.8,255.2 0.9,256.3 1.0,257.5 1.1,258.6 1.2,259.8 1.4,260.9 1.5,262.1 1.7,263.2 1.8,264.4 2.0,265.5 2.2,266.7 2.3,267.8 2.5,269.0 2.6,270.2 2.8,271.3 2.9,272.5 3.1,273.6 3.2,274.8 3.4,275.9 3.5,277.1 3.7,278.2 3.9,279.4 4.1,280.5 4.3,281.7 4.5,282.8 4.8,284.0 5.1,285.1 5.4,286.1 5.7,287.2 6.0,288.3 6.4,289.4 6.7,290.4 7.1,291.5 7.5,292.6 7.9,293.6 8.3,294.7 8.7,295.8 9.2,296.9 9.6,297.9 10.0,299.0 10.4,300.1 10.9,301.1 11.4,302.2 11.9,303.3 12.4,304.4 12.9,305.4 13.4,306.5 14.0,307.6 14.5,308.6 15.0,309.7 15.4,310.8 15.9,311.9 16.3,312.9 16.7,314.0 17.1,315.2 17.5,316.3 17.8,317.5 18.1,318.6 18.4,319.8 18.7,320.9 19.0,322.1 19.3,323.2 19.5,324.4 19.8,325.5 20.0,326.7 20.3,327.8 20.5,329.0 20.7,330.2 20.9,331.3 21.2,332.5 21.4,333.7 21.5,334.9 21.7,336.1 21.9,337.3 22.1,338.4 22.2,339.6 22.3,340.7 22.5,341.9 22.6,342.9 22.7,344.0 22.8,345.1 22.9,346.0 23.0,346.8 23.0,347.6 23.1,348.3 23.1,349.1 23.1,350.0 23.1,351.1 23.1,352.4 23.1,354.0 23.1,356.0 23.1,356.8 23.1,357.7 23.1,358.7 23.1,359.7 23.1,360.8 23.1,361.9 23.1,363.1 23.1,364.3 23.1,365.6 23.1,366.9 23.1,368.2 23.1,369.5 23.1,370.9 23.1,372.3 23.1,373.6 23.1,375.0 23.1,376.4 23.1,377.7 23.1,379.1 23.1,380.4 23.1,381.7 23.1,383.0 23.1,384.2 23.1,385.4 23.1,386.5 23.1,387.6 23.1,388.6 23.1,389.6 23.1,390.4 23.1,391.3 23.1,392.0 23.1,394.8 23.1,396.2 23.0,396.8 23.0,397.1 22.8,397.7 22.7,399.0 22.6,399.9 22.5,400.9 22.5,401.9 22.4,403.0 22.3,404.2 22.2,405.4 22.1,406.6 22.0,407.9 21.9,409.1 21.7,410.4 21.6,411.6 21.4,412.8 21.2,414.0 21.0,415.2 20.8,416.3 20.5,417.5 20.3,418.6 20.0,419.8 19.8,420.9 19.5,422.1 19.2,423.2 18.9,424.4 18.5,425.5 18.2,426.7 17.9,427.8 17.5,429.0 17.2,430.1 16.8,431.2 16.4,432.3 16.0,433.3 15.6,434.4 15.2,435.5 14.8,436.6 14.4,437.7 13.9,438.8 13.5,439.9 13.1,440.9 12.6,442.0 12.2,443.0 11.8,444.0 11.3,445.2 10.8,446.3 10.3,447.4 9.8,448.5 9.2,449.6 8.7,450.6 8.2,451.7 7.7,452.7 7.2,453.8 6.8,454.9 6.4,455.9 6.0,457.0 5.7,458.1 5.3,459.2 5.0,460.3 4.8,461.4 4.5,462.5 4.3,463.6 4.1,464.7 3.9,465.7 3.7,466.8 3.5,467.9 3.3,469.0 3.1,470.0 2.9,471.1 2.7,472.2 2.6,473.3 2.4,474.4 2.3,475.5 2.1,476.5 2.0,477.6 1.9,478.7 1.7,479.8 1.6,480.9 1.5,482.0 1.4,483.1 1.3,484.3 1.2,485.5 1.1,486.7 1.0,487.8 0.9,489.0 0.8,490.2 0.7,491.4 0.6,492.6 0.6,493.8 0.5,495.0 0.4,496.2 0.4,497.5 0.3,498.9 0.3,500.3 0.2,501.6 0.2,503.0 0.1,504.2 0.1,505.4 0.1,506.4 0.0,507.3 0.0,508.0 0.0,508.0" fill="#000"/>
</g>
<g transform="translate(92.52,0)" clip-path="url(#sc)">
<rect x="-0.5" y="0" width="24.13" height="555.8" fill="url(#sg)"/>
<polygon points="0.0,52.0 0.0,52.0 0.1,52.6 0.2,53.4 0.3,54.3 0.5,55.4 0.6,56.5 0.8,57.7 1.0,58.9 1.2,60.2 1.4,61.5 1.6,62.9 1.8,64.2 2.0,65.5 2.2,66.7 2.5,67.9 2.7,69.0 3.0,70.1 3.2,71.2 3.5,72.3 3.8,73.4 4.1,74.5 4.4,75.6 4.7,76.6 5.0,77.7 5.3,78.7 5.7,79.8 6.1,80.8 6.4,81.9 6.8,82.9 7.2,84.0 7.6,85.1 8.1,86.1 8.5,87.2 9.0,88.3 9.5,89.4 10.0,90.4 10.6,91.5 11.1,92.6 11.6,93.6 12.1,94.7 12.6,95.8 13.1,96.9 13.6,97.9 14.0,99.0 14.4,100.1 14.8,101.1 15.2,102.2 15.6,103.3 16.0,104.4 16.4,105.4 16.8,106.5 17.1,107.6 17.5,108.6 17.8,109.7 18.1,110.8 18.4,111.9 18.7,112.9 19.0,114.0 19.3,115.2 19.5,116.3 19.8,117.5 20.0,118.6 20.2,119.8 20.4,120.9 20.6,122.1 20.8,123.2 21.0,124.4 21.1,125.5 21.3,126.7 21.4,127.8 21.5,129.0 21.6,130.1 21.7,131.2 21.8,132.3 21.8,133.3 21.9,134.3 21.9,135.3 21.9,136.4 22.0,137.5 22.0,138.6 22.0,139.9 22.0,141.1 22.0,142.5 22.0,144.0 22.0,145.0 22.0,146.0 22.0,147.0 22.0,148.1 22.0,149.2 22.0,150.3 21.9,151.4 21.9,152.6 21.9,153.8 21.9,155.0 21.9,156.2 21.8,157.4 21.8,158.7 21.8,159.9 21.8,161.2 21.7,162.5 21.7,163.8 21.7,165.1 21.6,166.4 21.6,167.7 21.6,169.0 21.6,170.1 21.6,171.2 21.5,172.3 21.5,173.4 21.5,174.6 21.5,175.8 21.5,177.0 21.4,178.2 21.4,179.4 21.4,180.6 21.4,181.9 21.4,183.1 21.3,184.3 21.3,185.5 21.3,186.8 21.3,188.0 21.2,189.2 21.2,190.3 21.2,191.5 21.2,192.7 21.1,193.8 21.1,194.9 21.1,196.0 21.1,197.0 21.0,198.0 21.0,199.0 21.0,200.5 20.9,201.9 20.9,203.3 20.8,204.6 20.8,205.9 20.7,207.2 20.6,208.4 20.6,209.7 20.5,210.8 20.5,212.0 20.4,213.1 20.3,214.2 20.3,215.2 20.2,216.2 20.1,217.2 20.1,218.1 20.0,219.0 19.9,220.6 19.7,221.9 19.6,223.1 19.5,224.1 19.3,225.1 19.1,226.0 19.0,227.0 18.7,227.9 18.5,229.0 18.2,230.1 18.0,231.1 17.7,232.1 17.4,233.2 17.1,234.2 16.7,235.3 16.3,236.4 15.8,237.7 15.3,239.0 14.9,239.9 14.5,240.9 14.1,241.9 13.6,243.0 13.1,244.0 12.6,245.1 12.1,246.2 11.5,247.4 11.0,248.5 10.5,249.6 10.0,250.8 9.5,251.9 9.0,252.9 8.6,254.0 8.1,255.1 7.6,256.2 7.1,257.3 6.6,258.3 6.0,259.4 5.5,260.4 5.0,261.5 4.6,262.5 4.2,263.6 3.9,264.7 3.7,265.7 3.5,266.9 3.5,268.0 3.6,269.0 3.7,270.0 3.9,271.1 4.2,272.1 4.6,273.2 5.0,274.3 5.4,275.4 5.8,276.5 6.3,277.6 6.8,278.7 7.3,279.8 7.9,280.8 8.4,281.9 8.8,283.0 9.3,284.0 9.8,285.1 10.3,286.2 10.9,287.3 11.4,288.4 12.0,289.4 12.6,290.5 13.2,291.6 13.8,292.6 14.3,293.7 14.9,294.7 15.4,295.8 15.9,296.9 16.4,297.9 16.8,299.0 17.2,300.2 17.6,301.3 18.0,302.5 18.3,303.6 18.6,304.8 18.9,305.9 19.2,307.1 19.4,308.2 19.6,309.4 19.9,310.5 20.1,311.7 20.3,312.8 20.5,314.0 20.7,315.2 20.9,316.3 21.0,317.5 21.1,318.6 21.3,319.8 21.4,320.9 21.5,322.1 21.6,323.2 21.6,324.4 21.7,325.5 21.8,326.7 21.9,327.8 22.0,329.0 22.1,330.0 22.2,330.9 22.3,331.5 22.4,332.1 22.5,332.7 22.6,333.3 22.6,334.1 22.7,335.0 22.8,336.1 22.8,337.5 22.9,339.2 23.0,341.4 23.0,344.0 23.0,344.8 23.0,345.6 23.0,346.4 23.0,347.3 23.0,348.3 23.1,349.3 23.1,350.3 23.1,351.4 23.1,352.5 23.1,353.7 23.1,354.9 23.1,356.1 23.1,357.3 23.1,358.6 23.1,359.9 23.1,361.2 23.1,362.5 23.1,363.9 23.1,365.2 23.1,366.6 23.1,368.0 23.1,369.4 23.1,370.8 23.1,372.2 23.1,373.6 23.1,375.0 23.1,376.4 23.1,377.8 23.1,379.2 23.1,380.6 23.1,382.0 23.1,383.4 23.1,384.7 23.1,386.0 23.1,387.4 23.1,388.6 23.1,389.9 23.1,391.2 23.1,392.4 23.1,393.6 23.1,394.7 23.1,395.8 23.1,396.9 23.1,398.0 23.1,399.0 23.0,399.9 23.0,400.8 23.0,401.7 23.0,402.5 23.0,403.3 23.0,404.0 22.9,407.3 22.8,409.5 22.7,410.9 22.6,411.6 22.5,412.0 22.4,412.1 22.2,412.4 22.1,412.9 22.0,414.0 21.9,415.0 21.8,416.0 21.8,417.1 21.7,418.2 21.6,419.4 21.5,420.6 21.5,421.8 21.4,423.0 21.3,424.2 21.2,425.4 21.2,426.6 21.1,427.8 21.0,429.0 20.9,430.2 20.8,431.3 20.8,432.5 20.7,433.7 20.6,434.9 20.6,436.0 20.5,437.2 20.4,438.4 20.3,439.5 20.2,440.7 20.1,441.8 19.9,442.9 19.8,444.0 19.6,445.2 19.5,446.3 19.3,447.4 19.2,448.5 19.0,449.6 18.8,450.6 18.6,451.7 18.3,452.7 18.1,453.8 17.7,454.9 17.4,455.9 17.0,457.0 16.6,458.0 16.1,459.0 15.6,460.0 15.1,461.0 14.5,462.0 13.9,463.1 13.3,464.1 12.6,465.1 12.0,466.1 11.4,467.1 10.8,468.1 10.2,469.0 9.7,470.0 9.1,471.0 8.5,472.0 7.9,473.0 7.3,474.0 6.8,475.0 6.2,476.0 5.6,477.0 5.1,478.0 4.6,479.0 4.1,480.0 3.7,481.0 3.3,482.0 3.0,483.1 2.7,484.1 2.4,485.2 2.2,486.4 2.0,487.5 1.8,488.6 1.7,489.7 1.5,490.9 1.4,491.9 1.3,493.0 1.1,494.0 1.0,495.0 0.8,496.3 0.7,497.6 0.5,498.9 0.4,500.2 0.3,501.4 0.2,502.5 0.1,503.5 0.1,504.3 0.0,505.0 0.0,505.0" fill="#000"/>
</g>
<g transform="translate(115.65,0)" clip-path="url(#sc)">
<rect x="-0.5" y="0" width="24.13" height="555.8" fill="url(#sg)"/>
<polygon points="0.0,37.0 0.0,37.0 0.1,37.6 0.1,38.4 0.2,39.3 0.3,40.4 0.4,41.5 0.4,42.7 0.5,43.9 0.6,45.2 0.8,46.5 0.9,47.9 1.0,49.2 1.2,50.5 1.3,51.7 1.5,52.9 1.7,54.0 1.9,55.2 2.2,56.5 2.4,57.8 2.7,59.0 3.0,60.3 3.3,61.5 3.6,62.7 4.0,63.9 4.3,65.0 4.7,66.1 5.0,67.2 5.4,68.1 5.8,69.0 6.5,70.3 7.2,71.3 7.9,72.2 8.7,72.9 9.5,73.7 10.3,74.4 11.0,75.1 11.8,76.0 12.5,76.8 13.2,77.6 13.8,78.3 14.5,79.1 15.2,79.9 15.9,80.8 16.5,81.7 17.1,82.8 17.7,84.0 18.1,84.9 18.5,85.9 18.8,87.0 19.2,88.1 19.5,89.3 19.9,90.5 20.2,91.7 20.5,92.9 20.8,94.2 21.1,95.4 21.3,96.6 21.6,97.8 21.8,99.0 22.0,99.3 22.2,98.2 22.3,96.0 22.5,93.3 22.6,90.4 22.7,87.9 22.8,86.0 22.9,85.3 23.0,86.2 23.0,89.0 23.1,94.3 23.1,102.5 23.1,114.0 23.1,114.6 23.1,115.3 23.1,115.9 23.1,116.6 23.1,117.3 23.1,118.0 23.1,118.7 23.1,119.4 23.1,120.1 23.1,120.9 23.1,121.6 23.1,122.4 23.1,123.1 23.1,123.9 23.1,124.7 23.1,125.5 23.1,126.3 23.1,127.2 23.1,128.0 23.1,128.9 23.1,129.7 23.1,130.6 23.1,131.5 23.1,132.4 23.1,133.3 23.1,134.2 23.1,135.1 23.1,136.0 23.1,137.0 23.1,137.9 23.1,138.9 23.1,139.9 23.1,140.9 23.1,141.8 23.1,142.8 23.1,143.9 23.1,144.9 23.1,145.9 23.1,146.9 23.1,148.0 23.1,149.0 23.1,150.1 23.1,151.2 23.1,152.3 23.1,153.3 23.1,154.4 23.1,155.5 23.1,156.7 23.1,157.8 23.1,158.9 23.1,160.0 23.1,161.2 23.1,162.3 23.1,163.5 23.1,164.7 23.1,165.9 23.1,167.0 23.1,168.2 23.1,169.4 23.1,170.6 23.1,171.8 23.1,173.1 23.1,174.3 23.1,175.5 23.1,176.8 23.1,178.0 23.1,179.3 23.1,180.5 23.1,181.8 23.1,183.1 23.1,184.3 23.1,185.6 23.1,186.9 23.1,188.2 23.1,189.5 23.1,190.8 23.1,192.1 23.1,193.4 23.1,194.8 23.1,196.1 23.1,197.4 23.1,198.8 23.1,200.1 23.1,201.5 23.1,202.8 23.1,204.2 23.1,205.5 23.1,206.9 23.1,208.3 23.1,209.6 23.1,211.0 23.1,212.4 23.1,213.8 23.1,215.2 23.1,216.6 23.1,218.0 23.1,219.4 23.1,220.8 23.1,222.2 23.1,223.6 23.1,225.0 23.1,226.5 23.1,227.9 23.1,229.3 23.1,230.8 23.1,232.2 23.1,233.6 23.1,235.1 23.1,236.5 23.1,238.0 23.1,239.4 23.1,240.9 23.1,242.3 23.1,243.8 23.1,245.2 23.1,246.7 23.1,248.1 23.1,249.6 23.1,251.1 23.1,252.5 23.1,254.0 23.1,255.5 23.1,256.9 23.1,258.4 23.1,259.9 23.1,261.4 23.1,262.8 23.1,264.3 23.1,265.8 23.1,267.3 23.1,268.8 23.1,270.2 23.1,271.7 23.1,273.2 23.1,274.7 23.1,276.2 23.1,277.6 23.1,279.1 23.1,280.6 23.1,282.1 23.1,283.6 23.1,285.1 23.1,286.5 23.1,288.0 23.1,289.5 23.1,291.0 23.1,292.5 23.1,293.9 23.1,295.4 23.1,296.9 23.1,298.4 23.1,299.8 23.1,301.3 23.1,302.8 23.1,304.2 23.1,305.7 23.1,307.2 23.1,308.6 23.1,310.1 23.1,311.6 23.1,313.0 23.1,314.5 23.1,315.9 23.1,317.4 23.1,318.8 23.1,320.3 23.1,321.7 23.1,323.2 23.1,324.6 23.1,326.0 23.1,327.5 23.1,328.9 23.1,330.3 23.1,331.8 23.1,333.2 23.1,334.6 23.1,336.0 23.1,337.4 23.1,338.8 23.1,340.2 23.1,341.6 23.1,343.0 23.1,344.4 23.1,345.8 23.1,347.2 23.1,348.6 23.1,350.0 23.1,351.3 23.1,352.7 23.1,354.1 23.1,355.4 23.1,356.8 23.1,358.1 23.1,359.5 23.1,360.8 23.1,362.1 23.1,363.4 23.1,364.8 23.1,366.1 23.1,367.4 23.1,368.7 23.1,370.0 23.1,371.3 23.1,372.6 23.1,373.9 23.1,375.1 23.1,376.4 23.1,377.7 23.1,378.9 23.1,380.2 23.1,381.4 23.1,382.7 23.1,383.9 23.1,385.1 23.1,386.3 23.1,387.5 23.1,388.7 23.1,389.9 23.1,391.1 23.1,392.3 23.1,393.5 23.1,394.6 23.1,395.8 23.1,397.0 23.1,398.1 23.1,399.2 23.1,400.4 23.1,401.5 23.1,402.6 23.1,403.7 23.1,404.8 23.1,405.9 23.1,407.0 23.1,408.0 23.1,409.1 23.1,410.1 23.1,411.2 23.1,412.2 23.1,413.2 23.1,414.3 23.1,415.3 23.1,416.3 23.1,417.3 23.1,418.2 23.1,419.2 23.1,420.2 23.1,421.1 23.1,422.0 23.1,423.0 23.1,423.9 23.1,424.8 23.1,425.7 23.1,426.6 23.1,427.5 23.1,428.3 23.1,429.2 23.1,430.0 23.1,430.9 23.1,431.7 23.1,432.5 23.1,433.3 23.1,434.1 23.1,434.9 23.1,435.7 23.1,436.4 23.1,437.2 23.1,437.9 23.1,438.6 23.1,439.4 23.1,440.1 23.1,440.7 23.1,441.4 23.1,442.1 23.1,442.7 23.1,443.4 23.1,444.0 23.1,457.1 23.1,465.7 23.0,470.4 22.9,472.1 22.8,471.3 22.7,469.0 22.6,465.6 22.5,462.0 22.3,458.9 22.2,457.0 22.0,457.0 21.9,458.1 21.7,459.2 21.6,460.3 21.5,461.4 21.3,462.5 21.2,463.6 21.0,464.7 20.7,465.7 20.5,466.8 20.2,467.9 19.8,469.0 19.4,470.0 18.9,471.0 18.4,472.0 17.8,472.9 17.2,473.9 16.5,474.9 15.8,475.9 15.0,476.9 14.3,477.8 13.6,478.7 12.9,479.6 12.2,480.4 11.6,481.2 11.0,482.0 10.1,483.1 9.3,484.1 8.5,485.0 7.8,485.9 7.1,486.7 6.4,487.4 5.8,488.2 5.3,489.0 4.7,490.0 4.2,490.8 3.8,491.6 3.4,492.5 3.1,493.6 2.7,495.0 2.5,495.9 2.3,497.0 2.1,498.1 1.9,499.3 1.7,500.6 1.5,501.9 1.4,503.2 1.2,504.5 1.1,505.7 0.9,506.9 0.8,508.0 0.7,509.3 0.5,510.6 0.4,511.9 0.3,513.2 0.2,514.4 0.2,515.5 0.1,516.5 0.0,517.3 0.0,518.0 0.0,518.0" fill="#000"/>
<polygon points="23.3,263.0 22.6,263.1 21.8,263.3 20.7,263.5 19.5,263.7 18.4,264.0 17.2,264.3 16.2,264.7 15.1,265.2 13.9,265.9 12.8,266.7 11.7,267.4 10.8,268.0 10.2,268.4 10.2,268.4 10.9,268.6 11.8,268.9 13.0,269.2 14.1,269.5 15.3,269.9 16.2,270.4 17.1,271.0 17.9,271.7 18.6,272.5 19.3,273.3 19.9,274.1 20.5,275.0 20.9,275.8 21.4,276.8 21.7,277.7 22.1,278.6 22.5,279.8 22.8,281.1 23.1,282.2 23.3,283.0" fill="url(#sg)"/>
<polygon points="0.0,352.6 0.0,352.6 0.2,353.3 0.5,354.2 0.9,355.4 1.3,356.6 1.7,357.8 2.0,359.0 2.3,360.0 2.6,361.0 2.8,362.0 3.1,363.0 3.4,364.0 3.6,365.0 3.8,366.0 4.0,367.1 4.2,368.3 4.3,369.4 4.4,370.5 4.5,371.7 4.5,373.0 4.5,374.0 4.5,375.1 4.4,376.2 4.4,377.4 4.3,378.5 4.2,379.7 4.1,380.9 4.0,382.0 3.9,383.1 3.8,384.3 3.7,385.4 3.5,386.6 3.4,387.7 3.3,388.8 3.1,389.9 3.0,391.0 2.8,392.2 2.7,393.4 2.5,394.6 2.3,395.7 2.1,396.8 2.0,397.9 1.8,399.0 1.6,400.2 1.5,401.3 1.3,402.3 1.2,403.4 1.0,404.6 0.9,406.0 0.8,407.0 0.7,408.1 0.6,409.4 0.5,410.6 0.4,411.9 0.3,413.2 0.2,414.4 0.1,415.4 0.1,416.3 0.0,417.0 0.0,417.0" fill="url(#sg)"/>
</g>
<g transform="translate(138.78,0)" clip-path="url(#sc)">
<rect x="-0.5" y="0" width="24.13" height="555.8" fill="url(#sg)"/>
<polygon points="0.0,39.0 0.0,39.0 0.1,39.7 0.2,40.6 0.3,41.6 0.4,42.8 0.5,44.0 0.7,45.4 0.8,46.8 1.0,48.1 1.2,49.5 1.4,50.8 1.6,52.0 1.8,53.1 2.0,54.0 2.4,55.4 2.8,56.6 3.2,57.5 3.7,58.3 4.3,59.2 5.0,60.0 5.8,61.0 6.4,61.7 7.2,62.4 8.0,63.1 8.9,63.9 9.8,64.6 10.7,65.4 11.6,66.1 12.5,66.9 13.4,67.6 14.1,68.3 14.8,69.0 15.7,70.0 16.5,71.0 17.2,72.0 17.8,73.0 18.4,74.0 18.9,75.0 19.3,76.0 19.7,77.0 19.9,78.0 20.2,79.0 20.3,80.0 20.5,81.2 20.6,82.5 20.8,84.0 20.9,84.9 21.0,85.9 21.2,87.0 21.3,88.1 21.4,89.3 21.5,90.5 21.6,91.7 21.8,92.9 21.9,94.2 22.0,95.4 22.1,96.6 22.2,97.8 22.3,99.0 22.4,100.2 22.5,101.5 22.6,102.8 22.7,104.1 22.7,105.5 22.8,106.8 22.9,108.1 22.9,109.3 23.0,110.5 23.1,111.6 23.1,112.5 23.1,113.3 23.1,114.0 23.2,294.0 23.2,294.7 23.1,295.6 23.1,296.7 23.0,298.0 23.0,299.3 22.9,300.6 22.8,302.0 22.8,303.4 22.7,304.7 22.6,305.8 22.6,306.9 22.5,308.0 22.4,309.2 22.4,310.3 22.3,311.5 22.2,312.6 22.1,313.7 22.0,314.8 21.9,315.8 21.8,316.7 21.6,318.0 21.4,319.3 21.1,320.4 20.9,321.5 20.6,322.5 20.3,323.4 20.0,324.2 19.4,325.5 18.7,326.7 18.0,327.5 17.3,328.0 16.5,328.0 15.7,327.7 14.9,327.1 14.0,326.4 13.3,325.7 12.5,324.7 11.7,323.7 11.0,322.8 10.2,322.0 9.3,321.2 8.3,320.4 7.4,319.9 6.5,319.7 5.6,319.9 4.6,320.4 3.7,321.1 2.8,322.0 2.1,322.9 1.5,324.1 0.9,325.4 0.4,326.4 0.0,327.2" fill="#000"/>
<polygon points="0.0,420.5 0.7,420.3 1.7,420.1 2.8,419.8 4.0,419.5 5.0,419.0 5.9,418.4 6.8,417.8 7.7,417.1 8.6,416.2 9.5,415.3 10.1,414.6 10.8,413.7 11.4,412.9 12.1,411.9 12.7,411.0 13.4,410.1 14.0,409.3 14.8,408.3 15.6,407.4 16.4,406.4 17.1,405.5 17.9,404.7 18.5,404.0 19.6,403.0 20.6,402.5 21.2,402.1 21.2,402.1 21.2,402.7 21.3,403.4 21.3,404.2 21.4,405.1 21.5,406.1 21.5,407.2 21.6,408.6 21.7,410.1 21.7,411.8 21.8,413.8 21.8,414.7 21.8,415.6 21.9,416.6 21.9,417.7 21.9,418.9 21.9,420.1 21.9,421.3 22.0,422.6 22.0,423.9 22.0,425.3 22.0,426.6 22.0,428.0 22.1,429.3 22.1,430.7 22.1,432.1 22.1,433.4 22.1,434.7 22.1,436.0 22.2,437.3 22.2,438.5 22.2,439.7 22.2,440.8 22.2,441.8 22.2,442.8 22.2,443.7 22.2,445.5 22.2,447.1 22.1,448.5 22.1,449.7 22.1,450.8 22.0,451.8 22.0,452.8 21.9,453.7 21.9,454.7 21.9,455.7 21.9,456.8 21.9,458.0 22.0,459.2 22.1,460.5 22.1,461.7 22.2,463.0 22.3,464.2 22.4,465.4 22.5,466.6 22.5,467.7 22.6,468.7 22.6,469.6 22.6,471.0 22.5,472.2 22.4,473.2 22.3,474.1 22.1,475.0 21.9,476.0 21.7,477.1 21.5,478.2 21.2,479.2 20.9,480.3 20.5,481.4 20.0,482.5 19.4,483.5 18.8,484.4 18.0,485.4 17.3,486.4 16.5,487.3 15.7,488.2 14.9,489.0 14.0,489.8 13.2,490.5 12.3,491.1 11.4,491.7 10.6,492.2 9.7,492.7 8.7,493.3 7.6,493.7 6.6,494.1 5.6,494.6 4.6,495.3 3.8,496.0 3.0,496.9 2.2,497.8 1.5,498.8 0.9,499.7 0.4,500.4 -0.0,501.5 -0.0,502.4 0.0,503.0" fill="#000"/>
<polygon points="0.0,129.0 0.0,129.0 0.2,129.5 0.6,130.2 1.2,131.5 1.5,132.2 1.9,133.1 2.2,134.0 2.7,135.0 3.1,136.2 3.6,137.5 4.2,139.0 4.5,139.8 4.9,140.7 5.2,141.7 5.6,142.7 6.0,143.8 6.4,144.9 6.8,146.0 7.2,147.2 7.6,148.3 8.0,149.5 8.4,150.7 8.8,151.8 9.2,152.9 9.5,154.0 9.8,155.2 10.2,156.4 10.5,157.6 10.9,158.8 11.2,160.0 11.5,161.3 11.8,162.5 12.1,163.7 12.4,164.8 12.6,165.9 12.8,167.0 13.0,168.0 13.2,169.0 13.4,170.4 13.6,171.7 13.6,172.9 13.7,174.1 13.7,175.1 13.6,176.1 13.6,177.1 13.6,178.0 13.6,179.1 13.6,179.9 13.6,180.6 13.5,181.4 13.4,182.5 13.2,184.0 13.1,184.9 13.0,185.8 12.9,186.9 12.8,188.0 12.7,189.1 12.5,190.3 12.4,191.6 12.2,192.9 12.0,194.1 11.8,195.4 11.6,196.6 11.3,197.8 11.0,199.0 10.7,200.1 10.3,201.2 9.9,202.3 9.5,203.4 9.1,204.5 8.6,205.6 8.1,206.7 7.7,207.8 7.2,208.8 6.7,209.8 6.3,210.8 5.8,211.8 5.4,212.7 5.0,213.6 4.4,214.9 3.8,216.1 3.2,217.3 2.7,218.4 2.1,219.4 1.6,220.4 1.2,221.2 0.8,222.0 0.5,222.6 0.0,223.9 0.0,224.0 0.0,224.0" fill="url(#sg)"/>
</g>
<g transform="translate(161.91,0)" clip-path="url(#sc)">
<rect x="-0.5" y="0" width="24.13" height="555.8" fill="url(#sg)"/>
<polygon points="0.0,54.6 0.7,55.2 1.7,56.0 2.7,56.8 3.7,57.6 4.5,58.2 5.2,58.8 5.9,59.3 6.7,59.8 7.7,60.2 8.9,60.6 10.0,61.0 11.2,61.3 12.3,61.6 13.5,61.8 14.6,62.1 15.7,62.4 16.6,62.8 17.6,63.1 18.5,63.6 19.4,64.1 20.1,64.6 21.1,65.4 22.0,66.4 22.7,67.4 23.2,68.0 23.2,131.4 22.8,132.3 22.2,133.5 21.5,134.4 20.6,134.7 19.3,134.4 18.6,134.1 17.7,133.7 16.8,133.2 15.8,132.7 14.8,132.1 13.9,131.6 12.9,130.9 11.8,130.3 10.7,129.7 9.7,129.1 8.8,128.7 7.6,128.3 6.4,128.1 5.4,128.1 4.3,128.1 3.1,128.3 1.9,128.6 0.8,128.9 0.0,129.1" fill="#000"/>
<polygon points="0.0,232.2 0.8,232.5 1.9,232.8 3.1,233.2 4.3,233.4 5.4,233.4 6.4,233.3 7.6,233.1 8.8,232.7 9.7,232.3 10.7,231.7 11.8,231.0 12.9,230.4 13.9,229.7 14.8,229.2 15.8,228.7 16.8,228.2 17.7,227.8 18.5,227.5 19.3,227.3 20.4,227.2 21.3,227.3 22.0,227.7 22.6,228.6 22.9,229.8 23.2,230.7 23.2,304.0 23.0,304.7 22.7,305.7 22.4,306.8 22.0,307.8 21.5,308.5 20.7,309.0 19.8,309.2 18.8,309.3 17.8,309.2 16.7,309.0 15.6,308.6 14.5,308.1 13.3,307.7 12.3,307.3 11.2,306.9 10.1,306.5 9.1,306.2 8.1,306.0 7.1,306.0 6.1,306.2 5.3,306.6 4.3,307.0 3.4,307.4 2.4,308.0 1.4,308.6 0.6,309.1 0.0,309.5" fill="#000"/>
<polygon points="0.0,429.2 0.8,429.5 1.9,430.0 3.1,430.4 4.3,430.7 5.4,430.8 6.4,430.9 7.6,430.8 8.8,430.6 9.7,430.4 10.7,430.1 11.8,429.7 12.8,429.4 13.8,429.1 14.8,428.8 15.9,428.6 17.1,428.4 18.2,428.2 19.2,428.2 20.0,428.2 21.0,428.4 21.7,428.9 22.3,429.5 22.7,430.5 23.0,431.7 23.2,432.5 23.2,488.9 22.9,489.5 22.5,490.4 21.9,491.2 21.2,492.0 20.4,492.7 19.3,493.4 18.4,493.9 17.3,494.3 16.1,494.7 14.8,495.0 13.8,495.2 12.7,495.3 11.6,495.5 10.5,495.6 9.4,495.7 8.4,495.9 7.1,496.2 5.9,496.5 4.8,496.8 3.9,497.2 2.9,497.8 2.0,498.4 1.4,499.1 0.5,500.2 0.0,501.0" fill="#000"/>
</g>
<g transform="translate(185.04,0)" clip-path="url(#sc)">
<rect x="-0.5" y="0" width="24.13" height="555.8" fill="url(#sg)"/>
<polygon points="17.8,59.5 18.9,59.6 20.0,60.0 20.9,60.6 21.7,61.4 22.3,62.3 22.7,63.4 22.8,64.5 22.8,118.5 22.7,119.6 22.3,120.7 21.7,121.6 20.9,122.4 20.0,123.0 18.9,123.4 17.8,123.5 5.4,123.5 4.3,123.4 3.2,123.0 2.3,122.4 1.5,121.6 0.9,120.7 0.5,119.6 0.4,118.5 0.4,64.5 0.5,63.4 0.9,62.3 1.5,61.4 2.3,60.6 3.2,60.0 4.3,59.6 5.4,59.5" fill="#000"/>
<polygon points="17.8,237.5 18.9,237.6 20.0,238.0 20.9,238.6 21.7,239.4 22.3,240.3 22.7,241.4 22.8,242.5 22.8,298.3 22.7,299.4 22.3,300.5 21.7,301.4 20.9,302.2 20.0,302.8 18.9,303.2 17.8,303.3 5.4,303.3 4.3,303.2 3.2,302.8 2.3,302.2 1.5,301.4 0.9,300.5 0.5,299.4 0.4,298.3 0.4,242.5 0.5,241.4 0.9,240.3 1.5,239.4 2.3,238.6 3.2,238.0 4.3,237.6 5.4,237.5" fill="#000"/>
<polygon points="17.8,433.3 18.9,433.4 20.0,433.8 20.9,434.4 21.7,435.2 22.3,436.1 22.7,437.2 22.8,438.3 22.8,491.6 22.7,492.7 22.3,493.8 21.7,494.7 20.9,495.5 20.0,496.1 18.9,496.5 17.8,496.6 5.4,496.6 4.3,496.5 3.2,496.1 2.3,495.5 1.5,494.7 0.9,493.8 0.5,492.7 0.4,491.6 0.4,438.3 0.5,437.2 0.9,436.1 1.5,435.2 2.3,434.4 3.2,433.8 4.3,433.4 5.4,433.3" fill="#000"/>
</g>
<g transform="translate(208.16,0)" clip-path="url(#sc)">
<rect x="-0.5" y="0" width="24.13" height="555.8" fill="url(#sg)"/>
<polygon points="23.1,54.6 22.4,55.2 21.5,56.0 20.4,56.8 19.4,57.6 18.7,58.2 18.0,58.8 17.3,59.3 16.4,59.8 15.4,60.2 14.3,60.6 13.1,61.0 11.9,61.3 10.8,61.6 9.7,61.8 8.6,62.1 7.4,62.4 6.5,62.8 5.6,63.1 4.7,63.6 3.8,64.1 3.0,64.6 2.0,65.4 1.2,66.4 0.4,67.4 -0.1,68.0 -0.1,131.4 0.4,132.3 1.0,133.5 1.6,134.4 2.6,134.7 3.8,134.4 4.6,134.1 5.4,133.7 6.3,133.2 7.3,132.7 8.3,132.1 9.3,131.6 10.3,130.9 11.3,130.3 12.4,129.7 13.4,129.1 14.3,128.7 15.6,128.3 16.7,128.1 17.8,128.1 18.8,128.1 20.0,128.3 21.3,128.6 22.4,128.9 23.1,129.1" fill="#000"/>
<polygon points="23.1,232.2 22.4,232.5 21.3,232.8 20.0,233.2 18.8,233.4 17.8,233.4 16.7,233.3 15.6,233.1 14.3,232.7 13.4,232.3 12.4,231.7 11.3,231.0 10.3,230.4 9.3,229.7 8.3,229.2 7.3,228.7 6.3,228.2 5.4,227.8 4.6,227.5 3.8,227.3 2.7,227.2 1.9,227.3 1.1,227.7 0.6,228.6 0.2,229.8 -0.1,230.7 -0.1,304.0 0.1,304.7 0.4,305.7 0.7,306.8 1.1,307.8 1.6,308.5 2.4,309.0 3.3,309.2 4.3,309.3 5.3,309.2 6.4,309.0 7.5,308.6 8.6,308.1 9.8,307.7 10.8,307.3 11.9,306.9 13.0,306.5 14.1,306.2 15.0,306.0 16.1,306.0 17.0,306.2 17.9,306.6 18.8,307.0 19.7,307.4 20.7,308.0 21.7,308.6 22.5,309.1 23.1,309.5" fill="#000"/>
<polygon points="23.1,429.2 22.4,429.5 21.3,430.0 20.0,430.4 18.8,430.7 17.8,430.8 16.7,430.9 15.6,430.8 14.3,430.6 13.4,430.4 12.4,430.1 11.4,429.7 10.3,429.4 9.3,429.1 8.3,428.8 7.2,428.6 6.1,428.4 5.0,428.2 4.0,428.2 3.1,428.2 2.1,428.4 1.4,428.9 0.8,429.5 0.4,430.5 0.1,431.7 -0.1,432.5 -0.1,488.9 0.2,489.5 0.7,490.4 1.2,491.2 1.9,492.0 2.8,492.7 3.8,493.4 4.8,493.9 5.8,494.3 7.0,494.7 8.3,495.0 9.3,495.2 10.4,495.3 11.5,495.5 12.7,495.6 13.8,495.7 14.7,495.9 16.0,496.2 17.2,496.5 18.3,496.8 19.2,497.2 20.3,497.8 21.1,498.4 21.8,499.1 22.6,500.2 23.1,501.0" fill="#000"/>
</g>
<g transform="translate(231.29,0)" clip-path="url(#sc)">
<rect x="-0.5" y="0" width="24.13" height="555.8" fill="url(#sg)"/>
<polygon points="23.1,39.0 23.1,39.0 23.0,39.7 22.9,40.6 22.8,41.6 22.7,42.8 22.6,44.0 22.4,45.4 22.3,46.8 22.1,48.1 21.9,49.5 21.8,50.8 21.6,52.0 21.3,53.1 21.1,54.0 20.7,55.4 20.3,56.6 19.9,57.5 19.4,58.3 18.8,59.2 18.2,60.0 17.3,61.0 16.7,61.7 15.9,62.4 15.1,63.1 14.3,63.9 13.3,64.6 12.4,65.4 11.5,66.1 10.6,66.9 9.8,67.6 9.0,68.3 8.3,69.0 7.4,70.0 6.6,71.0 5.9,72.0 5.3,73.0 4.8,74.0 4.3,75.0 3.8,76.0 3.5,77.0 3.2,78.0 3.0,79.0 2.8,80.0 2.7,81.2 2.5,82.5 2.3,84.0 2.2,84.9 2.1,85.9 2.0,87.0 1.8,88.1 1.7,89.3 1.6,90.5 1.5,91.7 1.4,92.9 1.2,94.2 1.1,95.4 1.0,96.6 0.9,97.8 0.8,99.0 0.7,100.2 0.6,101.5 0.6,102.8 0.5,104.1 0.4,105.5 0.3,106.8 0.3,108.1 0.2,109.3 0.1,110.5 0.1,111.6 0.0,112.5 0.0,113.3 0.0,114.0 -0.1,294.0 -0.0,294.7 -0.0,295.6 0.0,296.7 0.1,298.0 0.2,299.3 0.2,300.6 0.3,302.0 0.4,303.4 0.4,304.7 0.5,305.8 0.6,306.9 0.6,308.0 0.7,309.2 0.8,310.3 0.8,311.5 0.9,312.6 1.0,313.7 1.1,314.8 1.2,315.8 1.3,316.7 1.5,318.0 1.8,319.3 2.0,320.4 2.2,321.5 2.5,322.5 2.8,323.4 3.1,324.2 3.7,325.5 4.4,326.7 5.1,327.5 5.8,328.0 6.6,328.0 7.4,327.7 8.3,327.1 9.1,326.4 9.9,325.7 10.6,324.7 11.4,323.7 12.2,322.8 12.9,322.0 13.9,321.2 14.8,320.4 15.7,319.9 16.6,319.7 17.6,319.9 18.5,320.4 19.5,321.1 20.3,322.0 21.0,322.9 21.6,324.1 22.3,325.4 22.8,326.4 23.1,327.2" fill="#000"/>
<polygon points="23.1,420.5 22.4,420.3 21.5,420.1 20.3,419.8 19.2,419.5 18.1,419.0 17.2,418.4 16.3,417.8 15.4,417.1 14.5,416.2 13.6,415.3 13.0,414.6 12.3,413.7 11.7,412.9 11.1,411.9 10.4,411.0 9.8,410.1 9.1,409.3 8.4,408.3 7.6,407.4 6.8,406.4 6.0,405.5 5.3,404.7 4.6,404.0 3.5,403.0 2.6,402.5 1.9,402.1 1.9,402.1 1.9,402.7 1.8,403.4 1.8,404.2 1.7,405.1 1.7,406.1 1.6,407.2 1.5,408.6 1.4,410.1 1.4,411.8 1.3,413.8 1.3,414.7 1.3,415.6 1.3,416.6 1.2,417.7 1.2,418.9 1.2,420.1 1.2,421.3 1.2,422.6 1.1,423.9 1.1,425.3 1.1,426.6 1.1,428.0 1.1,429.3 1.0,430.7 1.0,432.1 1.0,433.4 1.0,434.7 1.0,436.0 1.0,437.3 1.0,438.5 1.0,439.7 0.9,440.8 0.9,441.8 0.9,442.8 0.9,443.7 0.9,445.5 1.0,447.1 1.0,448.5 1.0,449.7 1.1,450.8 1.1,451.8 1.2,452.8 1.2,453.7 1.2,454.7 1.2,455.7 1.2,456.8 1.2,458.0 1.1,459.2 1.1,460.5 1.0,461.7 0.9,463.0 0.8,464.2 0.7,465.4 0.6,466.6 0.6,467.7 0.5,468.7 0.5,469.6 0.6,471.0 0.6,472.2 0.7,473.2 0.9,474.1 1.0,475.0 1.2,476.0 1.4,477.1 1.7,478.2 1.9,479.2 2.2,480.3 2.6,481.4 3.1,482.5 3.7,483.5 4.4,484.4 5.1,485.4 5.9,486.4 6.7,487.3 7.5,488.2 8.2,489.0 9.1,489.8 10.0,490.5 10.8,491.1 11.7,491.7 12.6,492.2 13.4,492.7 14.5,493.3 15.5,493.7 16.6,494.1 17.6,494.6 18.5,495.3 19.3,496.0 20.1,496.9 20.9,497.8 21.6,498.8 22.3,499.7 22.7,500.4 23.2,501.5 23.2,502.4 23.1,503.0" fill="#000"/>
<polygon points="23.1,129.0 23.1,129.0 22.9,129.5 22.5,130.2 21.9,131.5 21.6,132.2 21.3,133.1 20.9,134.0 20.5,135.0 20.0,136.2 19.5,137.5 18.9,139.0 18.6,139.8 18.3,140.7 17.9,141.7 17.5,142.7 17.1,143.8 16.7,144.9 16.3,146.0 15.9,147.2 15.5,148.3 15.1,149.5 14.7,150.7 14.3,151.8 14.0,152.9 13.6,154.0 13.3,155.2 12.9,156.4 12.6,157.6 12.3,158.8 11.9,160.0 11.6,161.3 11.3,162.5 11.0,163.7 10.8,164.8 10.5,165.9 10.3,167.0 10.1,168.0 9.9,169.0 9.7,170.4 9.6,171.7 9.5,172.9 9.5,174.1 9.5,175.1 9.5,176.1 9.5,177.1 9.5,178.0 9.5,179.1 9.5,179.9 9.6,180.6 9.6,181.4 9.7,182.5 9.9,184.0 10.0,184.9 10.1,185.8 10.2,186.9 10.3,188.0 10.5,189.1 10.6,190.3 10.8,191.6 10.9,192.9 11.1,194.1 11.3,195.4 11.6,196.6 11.8,197.8 12.1,199.0 12.4,200.1 12.8,201.2 13.2,202.3 13.6,203.4 14.1,204.5 14.5,205.6 15.0,206.7 15.5,207.8 15.9,208.8 16.4,209.8 16.9,210.8 17.3,211.8 17.7,212.7 18.1,213.6 18.7,214.9 19.3,216.1 19.9,217.3 20.5,218.4 21.0,219.4 21.5,220.4 21.9,221.2 22.3,222.0 22.6,222.6 23.1,223.9 23.1,224.0 23.1,224.0" fill="url(#sg)"/>
</g>
<g transform="translate(254.42,0)" clip-path="url(#sc)">
<rect x="-0.5" y="0" width="24.13" height="555.8" fill="url(#sg)"/>
<polygon points="23.1,37.0 23.1,37.0 23.1,37.6 23.0,38.4 22.9,39.3 22.9,40.4 22.8,41.5 22.7,42.7 22.6,43.9 22.5,45.2 22.4,46.5 22.2,47.9 22.1,49.2 22.0,50.5 21.8,51.7 21.6,52.9 21.4,54.0 21.2,55.2 20.9,56.5 20.7,57.8 20.4,59.0 20.1,60.3 19.8,61.5 19.5,62.7 19.2,63.9 18.8,65.0 18.5,66.1 18.1,67.2 17.7,68.1 17.3,69.0 16.7,70.3 16.0,71.3 15.2,72.2 14.4,72.9 13.7,73.7 12.9,74.4 12.1,75.1 11.3,76.0 10.7,76.8 10.0,77.6 9.3,78.3 8.6,79.1 7.9,79.9 7.3,80.8 6.6,81.7 6.0,82.8 5.4,84.0 5.0,84.9 4.7,85.9 4.3,87.0 3.9,88.1 3.6,89.3 3.3,90.5 2.9,91.7 2.6,92.9 2.3,94.2 2.1,95.4 1.8,96.6 1.6,97.8 1.3,99.0 1.1,99.3 1.0,98.2 0.8,96.0 0.7,93.3 0.5,90.4 0.4,87.9 0.3,86.0 0.2,85.3 0.2,86.2 0.1,89.0 0.0,94.3 0.0,102.5 0.0,114.0 0.0,114.6 0.0,115.3 0.0,115.9 0.0,116.6 0.0,117.3 0.0,118.0 0.0,118.7 0.0,119.4 0.0,120.1 0.0,120.9 0.0,121.6 0.0,122.4 0.0,123.1 0.0,123.9 0.0,124.7 0.0,125.5 0.0,126.3 0.0,127.2 0.0,128.0 0.0,128.9 0.0,129.7 0.0,130.6 0.0,131.5 0.0,132.4 0.0,133.3 0.0,134.2 0.0,135.1 0.0,136.0 0.0,137.0 0.0,137.9 0.0,138.9 0.0,139.9 0.0,140.9 0.0,141.8 0.0,142.8 0.0,143.9 0.0,144.9 0.0,145.9 0.0,146.9 0.0,148.0 0.0,149.0 0.0,150.1 0.0,151.2 0.0,152.3 0.0,153.3 0.0,154.4 0.0,155.5 0.0,156.7 0.0,157.8 0.0,158.9 0.0,160.0 0.0,161.2 0.0,162.3 0.0,163.5 0.0,164.7 0.0,165.9 0.0,167.0 0.0,168.2 0.0,169.4 0.0,170.6 0.0,171.8 0.0,173.1 0.0,174.3 0.0,175.5 0.0,176.8 0.0,178.0 0.0,179.3 0.0,180.5 0.0,181.8 0.0,183.1 0.0,184.3 0.0,185.6 0.0,186.9 0.0,188.2 0.0,189.5 0.0,190.8 0.0,192.1 0.0,193.4 0.0,194.8 0.0,196.1 0.0,197.4 0.0,198.8 0.0,200.1 0.0,201.5 0.0,202.8 0.0,204.2 0.0,205.5 0.0,206.9 0.0,208.3 0.0,209.6 0.0,211.0 0.0,212.4 0.0,213.8 0.0,215.2 0.0,216.6 0.0,218.0 0.0,219.4 0.0,220.8 0.0,222.2 0.0,223.6 0.0,225.0 0.0,226.5 0.0,227.9 0.0,229.3 0.0,230.8 0.0,232.2 0.0,233.6 0.0,235.1 0.0,236.5 0.0,238.0 0.0,239.4 0.0,240.9 0.0,242.3 0.0,243.8 0.0,245.2 0.0,246.7 0.0,248.1 0.0,249.6 0.0,251.1 0.0,252.5 0.0,254.0 0.0,255.5 0.0,256.9 0.0,258.4 0.0,259.9 0.0,261.4 0.0,262.8 0.0,264.3 0.0,265.8 0.0,267.3 0.0,268.8 0.0,270.2 0.0,271.7 0.0,273.2 0.0,274.7 0.0,276.2 0.0,277.6 0.0,279.1 0.0,280.6 0.0,282.1 0.0,283.6 0.0,285.1 0.0,286.5 0.0,288.0 0.0,289.5 0.0,291.0 0.0,292.5 0.0,293.9 0.0,295.4 0.0,296.9 0.0,298.4 0.0,299.8 0.0,301.3 0.0,302.8 0.0,304.2 0.0,305.7 0.0,307.2 0.0,308.6 0.0,310.1 0.0,311.6 0.0,313.0 0.0,314.5 0.0,315.9 0.0,317.4 0.0,318.8 0.0,320.3 0.0,321.7 0.0,323.2 0.0,324.6 0.0,326.0 0.0,327.5 0.0,328.9 0.0,330.3 0.0,331.8 0.0,333.2 0.0,334.6 0.0,336.0 0.0,337.4 0.0,338.8 0.0,340.2 0.0,341.6 0.0,343.0 0.0,344.4 0.0,345.8 0.0,347.2 0.0,348.6 0.0,350.0 0.0,351.3 0.0,352.7 0.0,354.1 0.0,355.4 0.0,356.8 0.0,358.1 0.0,359.5 0.0,360.8 0.0,362.1 0.0,363.4 0.0,364.8 0.0,366.1 0.0,367.4 0.0,368.7 0.0,370.0 0.0,371.3 0.0,372.6 0.0,373.9 0.0,375.1 0.0,376.4 0.0,377.7 0.0,378.9 0.0,380.2 0.0,381.4 0.0,382.7 0.0,383.9 0.0,385.1 0.0,386.3 0.0,387.5 0.0,388.7 0.0,389.9 0.0,391.1 0.0,392.3 0.0,393.5 0.0,394.6 0.0,395.8 0.0,397.0 0.0,398.1 0.0,399.2 0.0,400.4 0.0,401.5 0.0,402.6 0.0,403.7 0.0,404.8 0.0,405.9 0.0,407.0 0.0,408.0 0.0,409.1 0.0,410.1 0.0,411.2 0.0,412.2 0.0,413.2 0.0,414.3 0.0,415.3 0.0,416.3 0.0,417.3 0.0,418.2 0.0,419.2 0.0,420.2 0.0,421.1 0.0,422.0 0.0,423.0 0.0,423.9 0.0,424.8 0.0,425.7 0.0,426.6 0.0,427.5 0.0,428.3 0.0,429.2 0.0,430.0 0.0,430.9 0.0,431.7 0.0,432.5 0.0,433.3 0.0,434.1 0.0,434.9 0.0,435.7 0.0,436.4 0.0,437.2 0.0,437.9 0.0,438.6 0.0,439.4 0.0,440.1 0.0,440.7 0.0,441.4 0.0,442.1 0.0,442.7 0.0,443.4 0.0,444.0 0.0,457.1 0.1,465.7 0.1,470.4 0.2,472.1 0.3,471.3 0.4,469.0 0.5,465.6 0.7,462.0 0.8,458.9 1.0,457.0 1.1,457.0 1.3,458.1 1.4,459.2 1.5,460.3 1.7,461.4 1.8,462.5 2.0,463.6 2.2,464.7 2.4,465.7 2.6,466.8 2.9,467.9 3.3,469.0 3.7,470.0 4.2,471.0 4.7,472.0 5.3,472.9 6.0,473.9 6.7,474.9 7.4,475.9 8.1,476.9 8.8,477.8 9.6,478.7 10.3,479.6 10.9,480.4 11.6,481.2 12.1,482.0 13.0,483.1 13.8,484.1 14.6,485.0 15.3,485.9 16.0,486.7 16.7,487.4 17.3,488.2 17.8,489.0 18.5,490.0 19.0,490.8 19.4,491.6 19.7,492.5 20.1,493.6 20.4,495.0 20.6,495.9 20.8,497.0 21.0,498.1 21.2,499.3 21.4,500.6 21.6,501.9 21.7,503.2 21.9,504.5 22.1,505.7 22.2,506.9 22.3,508.0 22.5,509.3 22.6,510.6 22.7,511.9 22.8,513.2 22.9,514.4 23.0,515.5 23.0,516.5 23.1,517.3 23.1,518.0 23.1,518.0" fill="#000"/>
<polygon points="-0.2,263.0 0.5,263.1 1.4,263.3 2.4,263.5 3.6,263.7 4.8,264.0 5.9,264.3 6.9,264.7 8.1,265.2 9.2,265.9 10.4,266.7 11.4,267.4 12.3,268.0 12.9,268.4 12.9,268.4 12.3,268.6 11.3,268.9 10.2,269.2 9.0,269.5 7.9,269.9 6.9,270.4 6.0,271.0 5.2,271.7 4.5,272.5 3.8,273.3 3.2,274.1 2.7,275.0 2.2,275.8 1.8,276.8 1.4,277.7 1.0,278.6 0.6,279.8 0.3,281.1 0.0,282.2 -0.2,283.0" fill="url(#sg)"/>
<polygon points="23.1,352.6 23.1,352.6 22.9,353.3 22.6,354.2 22.2,355.4 21.9,356.6 21.5,357.8 21.1,359.0 20.9,360.0 20.6,361.0 20.3,362.0 20.0,363.0 19.8,364.0 19.5,365.0 19.3,366.0 19.1,367.1 19.0,368.3 18.8,369.4 18.7,370.5 18.7,371.7 18.6,373.0 18.6,374.0 18.7,375.1 18.7,376.2 18.8,377.4 18.9,378.5 18.9,379.7 19.0,380.9 19.1,382.0 19.2,383.1 19.3,384.3 19.5,385.4 19.6,386.6 19.7,387.7 19.9,388.8 20.0,389.9 20.1,391.0 20.3,392.2 20.5,393.4 20.6,394.6 20.8,395.7 21.0,396.8 21.2,397.9 21.3,399.0 21.5,400.2 21.7,401.3 21.8,402.3 21.9,403.4 22.1,404.6 22.2,406.0 22.3,407.0 22.4,408.1 22.5,409.4 22.6,410.6 22.7,411.9 22.8,413.2 22.9,414.4 23.0,415.4 23.1,416.3 23.1,417.0 23.1,417.0" fill="url(#sg)"/>
</g>
<g transform="translate(277.55,0)" clip-path="url(#sc)">
<rect x="-0.5" y="0" width="24.13" height="555.8" fill="url(#sg)"/>
<polygon points="23.1,52.0 23.1,52.0 23.0,52.6 22.9,53.4 22.8,54.3 22.6,55.4 22.5,56.5 22.3,57.7 22.2,58.9 22.0,60.2 21.8,61.5 21.6,62.9 21.3,64.2 21.1,65.5 20.9,66.7 20.7,67.9 20.4,69.0 20.2,70.1 19.9,71.2 19.6,72.3 19.3,73.4 19.0,74.5 18.7,75.6 18.4,76.6 18.1,77.7 17.8,78.7 17.4,79.8 17.1,80.8 16.7,81.9 16.3,82.9 15.9,84.0 15.5,85.1 15.1,86.1 14.6,87.2 14.1,88.3 13.6,89.4 13.1,90.4 12.6,91.5 12.0,92.6 11.5,93.6 11.0,94.7 10.5,95.8 10.0,96.9 9.6,97.9 9.1,99.0 8.7,100.1 8.3,101.1 7.9,102.2 7.5,103.3 7.1,104.4 6.7,105.4 6.4,106.5 6.0,107.6 5.7,108.6 5.3,109.7 5.0,110.8 4.7,111.9 4.4,112.9 4.1,114.0 3.8,115.2 3.6,116.3 3.3,117.5 3.1,118.6 2.9,119.8 2.7,120.9 2.5,122.1 2.3,123.2 2.2,124.4 2.0,125.5 1.9,126.7 1.7,127.8 1.6,129.0 1.5,130.1 1.4,131.2 1.4,132.3 1.3,133.3 1.3,134.3 1.2,135.3 1.2,136.4 1.2,137.5 1.2,138.6 1.1,139.9 1.1,141.1 1.1,142.5 1.1,144.0 1.1,145.0 1.1,146.0 1.1,147.0 1.1,148.1 1.2,149.2 1.2,150.3 1.2,151.4 1.2,152.6 1.2,153.8 1.2,155.0 1.3,156.2 1.3,157.4 1.3,158.7 1.3,159.9 1.4,161.2 1.4,162.5 1.4,163.8 1.5,165.1 1.5,166.4 1.5,167.7 1.5,169.0 1.5,170.1 1.6,171.2 1.6,172.3 1.6,173.4 1.6,174.6 1.6,175.8 1.7,177.0 1.7,178.2 1.7,179.4 1.7,180.6 1.7,181.9 1.8,183.1 1.8,184.3 1.8,185.5 1.8,186.8 1.9,188.0 1.9,189.2 1.9,190.3 1.9,191.5 2.0,192.7 2.0,193.8 2.0,194.9 2.0,196.0 2.1,197.0 2.1,198.0 2.1,199.0 2.2,200.5 2.2,201.9 2.3,203.3 2.3,204.6 2.4,205.9 2.4,207.2 2.5,208.4 2.5,209.7 2.6,210.8 2.7,212.0 2.7,213.1 2.8,214.2 2.9,215.2 2.9,216.2 3.0,217.2 3.1,218.1 3.1,219.0 3.3,220.6 3.4,221.9 3.5,223.1 3.7,224.1 3.8,225.1 4.0,226.0 4.2,227.0 4.4,227.9 4.6,229.0 4.9,230.1 5.2,231.1 5.4,232.1 5.7,233.2 6.1,234.2 6.4,235.3 6.9,236.4 7.3,237.7 7.8,239.0 8.2,239.9 8.6,240.9 9.1,241.9 9.5,243.0 10.0,244.0 10.5,245.1 11.1,246.2 11.6,247.4 12.1,248.5 12.6,249.6 13.1,250.8 13.6,251.9 14.1,252.9 14.5,254.0 15.0,255.1 15.5,256.2 16.0,257.3 16.6,258.3 17.1,259.4 17.6,260.4 18.1,261.5 18.5,262.5 18.9,263.6 19.2,264.7 19.5,265.7 19.6,266.9 19.6,268.0 19.6,269.0 19.4,270.0 19.2,271.1 18.9,272.1 18.6,273.2 18.2,274.3 17.7,275.4 17.3,276.5 16.8,277.6 16.3,278.7 15.8,279.8 15.3,280.8 14.8,281.9 14.3,283.0 13.8,284.0 13.3,285.1 12.8,286.2 12.3,287.3 11.7,288.4 11.1,289.4 10.5,290.5 9.9,291.6 9.4,292.6 8.8,293.7 8.2,294.7 7.7,295.8 7.2,296.9 6.8,297.9 6.3,299.0 5.9,300.2 5.5,301.3 5.2,302.5 4.8,303.6 4.5,304.8 4.2,305.9 4.0,307.1 3.7,308.2 3.5,309.4 3.3,310.5 3.0,311.7 2.8,312.8 2.6,314.0 2.4,315.2 2.3,316.3 2.1,317.5 2.0,318.6 1.9,319.8 1.8,320.9 1.7,322.1 1.6,323.2 1.5,324.4 1.4,325.5 1.3,326.7 1.2,327.8 1.1,329.0 1.0,330.0 0.9,330.9 0.8,331.5 0.8,332.1 0.7,332.7 0.6,333.3 0.5,334.1 0.4,335.0 0.3,336.1 0.3,337.5 0.2,339.2 0.2,341.4 0.1,344.0 0.1,344.8 0.1,345.6 0.1,346.4 0.1,347.3 0.1,348.3 0.1,349.3 0.1,350.3 0.1,351.4 0.1,352.5 0.1,353.7 0.0,354.9 0.0,356.1 0.0,357.3 0.0,358.6 0.0,359.9 0.0,361.2 0.0,362.5 0.0,363.9 0.0,365.2 0.0,366.6 0.0,368.0 0.0,369.4 0.0,370.8 0.0,372.2 0.0,373.6 0.0,375.0 0.0,376.4 0.0,377.8 0.0,379.2 0.0,380.6 0.0,382.0 0.0,383.4 0.0,384.7 0.0,386.0 0.0,387.4 0.0,388.6 0.0,389.9 0.0,391.2 0.0,392.4 0.0,393.6 0.1,394.7 0.1,395.8 0.1,396.9 0.1,398.0 0.1,399.0 0.1,399.9 0.1,400.8 0.1,401.7 0.1,402.5 0.1,403.3 0.1,404.0 0.2,407.3 0.3,409.5 0.4,410.9 0.5,411.6 0.6,412.0 0.8,412.1 0.9,412.4 1.0,412.9 1.1,414.0 1.2,415.0 1.3,416.0 1.4,417.1 1.4,418.2 1.5,419.4 1.6,420.6 1.7,421.8 1.7,423.0 1.8,424.2 1.9,425.4 2.0,426.6 2.0,427.8 2.1,429.0 2.2,430.2 2.3,431.3 2.4,432.5 2.4,433.7 2.5,434.9 2.6,436.0 2.7,437.2 2.7,438.4 2.8,439.5 2.9,440.7 3.1,441.8 3.2,442.9 3.3,444.0 3.5,445.2 3.7,446.3 3.8,447.4 4.0,448.5 4.2,449.6 4.3,450.6 4.6,451.7 4.8,452.7 5.1,453.8 5.4,454.9 5.7,455.9 6.1,457.0 6.5,458.0 7.0,459.0 7.5,460.0 8.1,461.0 8.7,462.0 9.2,463.1 9.9,464.1 10.5,465.1 11.1,466.1 11.7,467.1 12.3,468.1 12.9,469.0 13.4,470.0 14.0,471.0 14.6,472.0 15.2,473.0 15.8,474.0 16.4,475.0 16.9,476.0 17.5,477.0 18.0,478.0 18.5,479.0 19.0,480.0 19.4,481.0 19.8,482.0 20.2,483.1 20.5,484.1 20.7,485.2 20.9,486.4 21.1,487.5 21.3,488.6 21.5,489.7 21.6,490.9 21.7,491.9 21.9,493.0 22.0,494.0 22.1,495.0 22.3,496.3 22.5,497.6 22.6,498.9 22.7,500.2 22.8,501.4 22.9,502.5 23.0,503.5 23.1,504.3 23.1,505.0 23.1,505.0" fill="#000"/>
</g>
<g transform="translate(300.68,0)" clip-path="url(#sc)">
<rect x="-0.5" y="0" width="24.13" height="555.8" fill="url(#sg)"/>
<polygon points="23.1,49.0 23.1,49.0 23.0,49.7 22.9,50.6 22.8,51.6 22.7,52.8 22.5,54.0 22.4,55.3 22.2,56.6 22.1,57.8 21.9,59.0 21.8,60.1 21.6,61.1 21.5,62.1 21.4,63.2 21.2,64.2 21.1,65.3 20.9,66.4 20.7,67.7 20.5,69.0 20.4,70.0 20.2,71.0 20.1,72.1 20.0,73.2 19.8,74.4 19.6,75.6 19.5,76.8 19.3,78.0 19.1,79.2 18.9,80.4 18.7,81.6 18.5,82.8 18.2,84.0 18.0,85.1 17.7,86.1 17.5,87.2 17.2,88.3 16.9,89.4 16.6,90.4 16.3,91.5 16.0,92.6 15.7,93.6 15.3,94.7 15.0,95.8 14.6,96.9 14.2,97.9 13.8,99.0 13.4,100.1 13.0,101.1 12.5,102.2 12.0,103.3 11.5,104.4 11.0,105.4 10.5,106.5 10.0,107.6 9.5,108.6 9.0,109.7 8.5,110.8 8.0,111.9 7.6,112.9 7.1,114.0 6.7,115.1 6.3,116.2 5.9,117.3 5.5,118.3 5.2,119.4 4.8,120.5 4.5,121.6 4.1,122.7 3.8,123.8 3.5,124.9 3.2,125.9 2.9,127.0 2.6,128.0 2.3,129.0 2.0,130.1 1.8,131.2 1.5,132.2 1.3,133.1 1.0,134.1 0.8,135.1 0.6,136.0 0.5,137.1 0.3,138.2 0.2,139.3 0.0,140.6 0.0,142.0 0.0,143.0 0.0,144.0 0.0,145.1 0.0,146.3 0.0,147.5 0.0,148.8 0.0,150.0 0.0,151.3 0.0,152.7 0.0,154.0 0.0,155.3 0.0,156.5 0.0,157.8 0.0,159.0 0.0,160.1 0.0,161.2 0.0,162.2 0.0,163.2 0.0,164.0 0.0,165.8 0.0,167.2 0.0,168.2 0.1,169.0 0.2,169.8 0.4,170.8 0.6,172.0 0.8,172.9 1.1,173.9 1.4,174.9 1.7,175.9 2.0,177.0 2.3,178.1 2.7,179.2 3.0,180.4 3.4,181.6 3.8,182.8 4.1,184.0 4.4,185.0 4.7,186.0 5.0,187.0 5.3,188.1 5.6,189.1 5.9,190.2 6.2,191.3 6.5,192.4 6.9,193.5 7.2,194.6 7.5,195.7 7.9,196.8 8.3,197.9 8.6,199.0 9.0,200.1 9.4,201.1 9.8,202.2 10.3,203.3 10.7,204.4 11.1,205.4 11.6,206.5 12.0,207.6 12.5,208.6 12.9,209.7 13.4,210.8 13.8,211.9 14.2,212.9 14.6,214.0 15.0,215.1 15.4,216.2 15.8,217.3 16.2,218.4 16.6,219.6 17.0,220.7 17.4,221.8 17.8,222.9 18.1,224.0 18.5,225.1 18.8,226.1 19.1,227.1 19.4,228.1 19.6,229.0 20.0,230.3 20.2,231.5 20.5,232.5 20.6,233.5 20.8,234.5 20.9,235.5 21.1,236.5 21.2,237.7 21.3,239.0 21.4,240.0 21.5,241.0 21.7,242.1 21.8,243.2 21.9,244.4 22.0,245.6 22.1,246.8 22.2,248.0 22.2,249.2 22.3,250.4 22.3,251.6 22.3,252.8 22.3,254.0 22.3,255.2 22.2,256.3 22.1,257.5 22.0,258.6 21.9,259.8 21.8,260.9 21.6,262.1 21.4,263.2 21.3,264.4 21.1,265.5 21.0,266.7 20.8,267.8 20.6,269.0 20.5,270.2 20.3,271.3 20.2,272.5 20.1,273.6 19.9,274.8 19.8,275.9 19.6,277.1 19.5,278.2 19.3,279.4 19.1,280.5 18.8,281.7 18.6,282.8 18.3,284.0 18.1,285.1 17.8,286.1 17.4,287.2 17.1,288.3 16.7,289.4 16.4,290.4 16.0,291.5 15.6,292.6 15.2,293.6 14.8,294.7 14.4,295.8 14.0,296.9 13.6,297.9 13.1,299.0 12.7,300.1 12.2,301.1 11.7,302.2 11.2,303.3 10.7,304.4 10.2,305.4 9.7,306.5 9.2,307.6 8.7,308.6 8.2,309.7 7.7,310.8 7.2,311.9 6.8,312.9 6.4,314.0 6.0,315.2 5.7,316.3 5.3,317.5 5.0,318.6 4.7,319.8 4.4,320.9 4.1,322.1 3.8,323.2 3.6,324.4 3.3,325.5 3.1,326.7 2.9,327.8 2.6,329.0 2.4,330.2 2.2,331.3 2.0,332.5 1.8,333.7 1.6,334.9 1.4,336.1 1.2,337.3 1.1,338.4 0.9,339.6 0.8,340.7 0.7,341.9 0.5,342.9 0.4,344.0 0.3,345.1 0.2,346.0 0.2,346.8 0.1,347.6 0.1,348.3 0.0,349.1 0.0,350.0 0.0,351.1 0.0,352.4 0.0,354.0 0.0,356.0 0.0,356.8 0.0,357.7 0.0,358.7 0.0,359.7 0.0,360.8 0.0,361.9 0.0,363.1 0.0,364.3 0.0,365.6 0.0,366.9 0.0,368.2 0.0,369.5 0.0,370.9 0.0,372.3 0.0,373.6 0.0,375.0 0.0,376.4 0.0,377.7 0.0,379.1 0.0,380.4 0.0,381.7 0.0,383.0 0.0,384.2 0.0,385.4 0.0,386.5 0.0,387.6 0.0,388.6 0.0,389.6 0.0,390.4 0.0,391.3 0.0,392.0 0.0,394.8 0.0,396.2 0.1,396.8 0.2,397.1 0.3,397.7 0.4,399.0 0.5,399.9 0.6,400.9 0.7,401.9 0.7,403.0 0.8,404.2 0.9,405.4 1.0,406.6 1.1,407.9 1.3,409.1 1.4,410.4 1.6,411.6 1.7,412.8 1.9,414.0 2.1,415.2 2.4,416.3 2.6,417.5 2.8,418.6 3.1,419.8 3.4,420.9 3.7,422.1 4.0,423.2 4.3,424.4 4.6,425.5 4.9,426.7 5.3,427.8 5.6,429.0 6.0,430.1 6.3,431.2 6.7,432.3 7.1,433.3 7.5,434.4 7.9,435.5 8.3,436.6 8.8,437.7 9.2,438.8 9.6,439.9 10.1,440.9 10.5,442.0 10.9,443.0 11.3,444.0 11.8,445.2 12.3,446.3 12.8,447.4 13.4,448.5 13.9,449.6 14.4,450.6 14.9,451.7 15.4,452.7 15.9,453.8 16.3,454.9 16.7,455.9 17.1,457.0 17.5,458.1 17.8,459.2 18.1,460.3 18.4,461.4 18.6,462.5 18.8,463.6 19.1,464.7 19.3,465.7 19.5,466.8 19.7,467.9 19.8,469.0 20.0,470.0 20.2,471.1 20.4,472.2 20.6,473.3 20.7,474.4 20.9,475.5 21.0,476.5 21.1,477.6 21.3,478.7 21.4,479.8 21.5,480.9 21.6,482.0 21.7,483.1 21.9,484.3 22.0,485.5 22.1,486.7 22.2,487.8 22.2,489.0 22.3,490.2 22.4,491.4 22.5,492.6 22.6,493.8 22.6,495.0 22.7,496.2 22.8,497.5 22.8,498.9 22.9,500.3 22.9,501.6 23.0,503.0 23.0,504.2 23.0,505.4 23.1,506.4 23.1,507.3 23.1,508.0 23.1,508.0" fill="#000"/>
</g>
<g transform="translate(323.81,0)" clip-path="url(#sc)">
<rect x="-0.5" y="0" width="24.13" height="555.8" fill="url(#sg)"/>
<polygon points="23.1,97.0 23.1,97.0 23.0,97.6 22.9,98.4 22.8,99.3 22.7,100.4 22.5,101.5 22.4,102.7 22.2,103.9 22.1,105.2 21.9,106.5 21.8,107.8 21.6,109.0 21.5,110.1 21.4,111.1 21.3,112.3 21.2,113.4 21.1,114.6 20.9,115.7 20.8,116.9 20.7,118.1 20.6,119.3 20.5,120.5 20.4,121.7 20.2,122.8 20.1,124.0 20.0,125.2 19.9,126.3 19.8,127.5 19.6,128.6 19.5,129.8 19.4,130.9 19.3,132.1 19.1,133.2 19.0,134.4 18.9,135.5 18.8,136.7 18.7,137.8 18.6,139.0 18.5,140.2 18.5,141.3 18.4,142.5 18.3,143.6 18.3,144.8 18.2,145.9 18.2,147.1 18.1,148.2 18.1,149.4 18.0,150.5 18.0,151.7 18.0,152.8 17.9,154.0 17.9,155.2 17.9,156.3 17.8,157.5 17.8,158.6 17.7,159.8 17.7,160.9 17.7,162.1 17.7,163.2 17.6,164.4 17.6,165.5 17.6,166.7 17.6,167.8 17.6,169.0 17.6,170.2 17.7,171.3 17.7,172.5 17.7,173.6 17.8,174.8 17.8,175.9 17.9,177.1 18.0,178.2 18.0,179.4 18.1,180.5 18.2,181.7 18.2,182.8 18.3,184.0 18.4,185.2 18.5,186.3 18.6,187.5 18.7,188.6 18.8,189.8 19.0,190.9 19.1,192.1 19.2,193.2 19.3,194.4 19.5,195.5 19.6,196.7 19.7,197.8 19.8,199.0 19.9,200.2 20.1,201.3 20.2,202.5 20.3,203.6 20.4,204.8 20.5,205.9 20.7,207.1 20.8,208.2 20.9,209.4 21.0,210.5 21.1,211.7 21.2,212.8 21.3,214.0 21.4,215.2 21.5,216.4 21.6,217.6 21.7,218.8 21.8,220.0 21.9,221.2 22.0,222.4 22.1,223.6 22.2,224.8 22.2,225.9 22.3,227.0 22.4,228.0 22.4,229.0 22.5,230.3 22.6,231.5 22.7,232.5 22.7,233.5 22.8,234.5 22.8,235.5 22.9,236.5 22.9,237.7 22.8,239.0 22.8,240.0 22.7,241.0 22.7,242.1 22.6,243.2 22.5,244.4 22.4,245.6 22.3,246.8 22.2,248.0 22.1,249.2 22.0,250.4 21.9,251.6 21.7,252.8 21.6,254.0 21.5,255.2 21.4,256.3 21.3,257.5 21.1,258.6 21.0,259.8 20.8,260.9 20.7,262.1 20.5,263.2 20.4,264.4 20.3,265.5 20.1,266.7 20.0,267.8 19.8,269.0 19.7,270.2 19.6,271.3 19.4,272.5 19.3,273.6 19.2,274.8 19.1,275.9 18.9,277.1 18.8,278.2 18.7,279.4 18.5,280.5 18.4,281.7 18.3,282.8 18.1,284.0 18.0,285.2 17.8,286.3 17.7,287.5 17.6,288.6 17.4,289.8 17.3,290.9 17.1,292.1 16.9,293.2 16.8,294.4 16.6,295.5 16.5,296.7 16.3,297.8 16.1,299.0 16.0,300.2 15.8,301.3 15.6,302.5 15.4,303.6 15.2,304.8 15.0,305.9 14.8,307.1 14.6,308.2 14.4,309.4 14.2,310.5 14.0,311.7 13.8,312.8 13.6,314.0 13.4,315.2 13.2,316.3 13.0,317.5 12.8,318.6 12.6,319.8 12.4,320.9 12.2,322.1 11.9,323.2 11.7,324.4 11.5,325.5 11.3,326.7 11.1,327.8 10.8,329.0 10.6,330.2 10.4,331.3 10.1,332.5 9.9,333.6 9.6,334.8 9.4,335.9 9.1,337.1 8.8,338.2 8.6,339.4 8.3,340.5 8.1,341.7 7.9,342.8 7.6,344.0 7.4,345.2 7.2,346.4 6.9,347.6 6.7,348.8 6.5,350.0 6.3,351.2 6.0,352.4 5.8,353.6 5.6,354.8 5.4,355.9 5.3,357.0 5.1,358.0 4.9,359.0 4.7,360.3 4.5,361.5 4.4,362.5 4.2,363.5 4.1,364.5 4.0,365.5 3.9,366.5 3.8,367.7 3.7,369.0 3.7,370.0 3.7,371.0 3.7,372.1 3.7,373.2 3.7,374.4 3.7,375.6 3.7,376.8 3.8,378.0 3.8,379.2 3.9,380.4 3.9,381.6 4.0,382.8 4.1,384.0 4.2,385.2 4.4,386.3 4.5,387.5 4.7,388.6 4.8,389.8 5.0,390.9 5.2,392.1 5.4,393.2 5.6,394.4 5.8,395.5 6.0,396.7 6.2,397.8 6.4,399.0 6.6,400.2 6.8,401.3 7.1,402.5 7.3,403.6 7.5,404.8 7.7,405.9 7.9,407.1 8.2,408.2 8.4,409.4 8.6,410.5 8.9,411.7 9.1,412.8 9.3,414.0 9.6,415.2 9.8,416.3 10.0,417.5 10.3,418.6 10.5,419.8 10.7,420.9 11.0,422.1 11.2,423.2 11.4,424.4 11.7,425.5 11.9,426.7 12.1,427.8 12.3,429.0 12.5,430.2 12.7,431.3 12.9,432.5 13.1,433.6 13.3,434.8 13.5,435.9 13.7,437.1 13.9,438.2 14.0,439.4 14.2,440.5 14.4,441.7 14.6,442.8 14.8,444.0 15.0,445.2 15.3,446.3 15.5,447.5 15.7,448.6 15.9,449.8 16.2,450.9 16.4,452.1 16.6,453.2 16.9,454.4 17.1,455.5 17.3,456.7 17.5,457.8 17.7,459.0 17.9,460.2 18.1,461.3 18.3,462.5 18.5,463.6 18.7,464.8 18.9,465.9 19.1,467.1 19.3,468.2 19.5,469.4 19.6,470.5 19.8,471.7 20.0,472.8 20.1,474.0 20.3,475.2 20.4,476.3 20.6,477.5 20.7,478.7 20.9,479.9 21.0,481.0 21.2,482.2 21.3,483.4 21.4,484.5 21.6,485.7 21.7,486.8 21.8,487.9 21.9,489.0 22.1,490.3 22.2,491.7 22.3,493.0 22.5,494.4 22.6,495.8 22.7,497.1 22.8,498.3 22.9,499.4 23.0,500.5 23.1,501.3 23.1,502.0 23.1,502.0" fill="#000"/>
</g>
<g transform="translate(346.94,0)" clip-path="url(#sc)">
<rect x="-0.5" y="0" width="24.13" height="555.8" fill="url(#sg)"/>
</g>
<g transform="translate(370.07,0)" clip-path="url(#sc)">
<rect x="-0.5" y="0" width="24.13" height="555.8" fill="url(#sg)"/>
</g>
<rect x="0" y="0" width="393.2" height="1" fill="#eadfd6" opacity="0.7"/>
<rect x="0" y="554.8" width="393.2" height="1" fill="#eadfd6" opacity="0.7"/>
</svg>
<div class="p" style="left:4.500px;top:67px;width:37.800px;height:864px"></div>
<div class="d" style="left:4.500px;top:67px;width:37.800px;height:11px"></div>
<svg style="left:10px;top:70px" width="8" height="5" viewBox="0 0 8 5"><path d="M0.3 0L2.9 2.5L0.3 5ZM4 0L6.6 2.5L4 5Z" fill="#c6c6c6"/></svg>
<div class="a" style="left:14px;top:82px;width:19px;height:4px;background:repeating-linear-gradient(90deg,#6e6e6e 0 1px,transparent 1px 2px)"></div>
<div class="a" style="left:8px;top:96px;width:31px;height:24px;background:#363636;border-radius:3px;box-shadow:0 0 0 1px #5c5c5c"></div>
<svg style="left:15px;top:101px" width="15" height="15" viewBox="0 0 16 16"><path d="M8 0L11 3.4H8.8V7.2H12.6V5L16 8L12.6 11V8.8H8.8V12.6H11L8 16L5 12.6H7.2V8.8H3.4V11L0 8L3.4 5V7.2H7.2V3.4H5Z" fill="#e4e4e4"/></svg>
<svg style="left:33.1px;top:115.2px" width="3" height="3" viewBox="0 0 3 3"><path d="M3 0V3H0Z" fill="#b0b0b0"/></svg>
<svg style="left:12.5px;top:123.5px" width="20" height="20" viewBox="0 0 20 20"><rect x="3" y="3.8" width="15" height="12" fill="none" stroke="#dadada" stroke-width="1.5" stroke-dasharray="3.6 2.1"/></svg>
<svg style="left:33.1px;top:140.2px" width="3" height="3" viewBox="0 0 3 3"><path d="M3 0V3H0Z" fill="#b0b0b0"/></svg>
<svg style="left:12.5px;top:149px" width="20" height="20" viewBox="0 0 20 20"><path d="M2.7 4.500L11.400 7.800L18.100 2.400V11.600L10.500 14.200" fill="none" stroke="#dadada" stroke-width="1.200" stroke-linejoin="round"/><path d="M2.700 4.500L8.200 12.600" stroke="#dadada" stroke-width="1.200"/><path d="M8 14.300L3.100 16.600M9.600 14.800L7.200 18.700" stroke="#dadada" stroke-width="1.100" fill="none"/><circle cx="8.900" cy="13.700" r="1.500" fill="#535353" stroke="#dadada" stroke-width="1"/></svg>
<svg style="left:33.1px;top:165.7px" width="3" height="3" viewBox="0 0 3 3"><path d="M3 0V3H0Z" fill="#b0b0b0"/></svg>
<svg style="left:12.5px;top:176px" width="20" height="20" viewBox="0 0 20 20"><path d="M4.500 16.600L13.900 7.400" stroke="#dadada" stroke-width="3.300" stroke-linecap="round"/><path d="M12.400 8.900L13.400 7.900" stroke="#535353" stroke-width="1.100" stroke-linecap="round"/><path d="M9.750 1.800v3M8.250 3.300h3M18 1.300v4M16 3.300h4M18.800 7.700v3M17.300 9.200h3" stroke="#dadada" stroke-width="1" fill="none"/></svg>
<svg style="left:33.1px;top:192.7px" width="3" height="3" viewBox="0 0 3 3"><path d="M3 0V3H0Z" fill="#b0b0b0"/></svg>
<svg style="left:12px;top:200px" width="20" height="20" viewBox="0 0 20 20"><path d="M5.250 3.100h2.050v10.800h5.450v2.100h-7.500zM1.100 6h2.500v2h-2.500zM7.750 6h8.350v13.750h-2.100v-11.750h-6.250zM17.300 14.750h2.500v2.050h-2.500z" fill="#dadada"/></svg>
<svg style="left:33.1px;top:216.7px" width="3" height="3" viewBox="0 0 3 3"><path d="M3 0V3H0Z" fill="#b0b0b0"/></svg>
<svg style="left:12.5px;top:228px" width="20" height="20" viewBox="0 0 20 20"><path d="M11.600 8.300L4.400 15.300Q3.200 16.800 4.300 17.700Q5.300 18.500 6.700 17.300L13.900 10.500" fill="none" stroke="#dadada" stroke-width="1.300"/><path d="M9.300 5.600L15.600 11.400" stroke="#dadada" stroke-width="2.600"/><path d="M12.300 8.500L17 3.800" stroke="#dadada" stroke-width="3.700" stroke-linecap="round"/></svg>
<svg style="left:33.1px;top:244.7px" width="3" height="3" viewBox="0 0 3 3"><path d="M3 0V3H0Z" fill="#b0b0b0"/></svg>
<svg style="left:12.5px;top:254px" width="20" height="20" viewBox="0 0 20 20"><g transform="translate(10.600 10) rotate(-46)"><rect x="-9.600" y="-3.800" width="5.400" height="7.600" rx="1.200" fill="#dadada"/><rect x="4.200" y="-3.800" width="5.400" height="7.600" rx="1.200" fill="#dadada"/><rect x="-3.300" y="-3.300" width="6.600" height="6.600" fill="#474747" stroke="#dadada" stroke-width="0.900"/><circle cx="-1.500" cy="-1.500" r="0.800" fill="#dadada"/><circle cx="1.500" cy="-1.500" r="0.800" fill="#dadada"/><circle cx="-1.500" cy="1.500" r="0.800" fill="#dadada"/><circle cx="1.500" cy="1.500" r="0.800" fill="#dadada"/><circle cx="0" cy="0" r="0.700" fill="#fff"/></g><path d="M9.240 3.700A4.200 4.200 0 1 0 2.630 8.770" fill="none" stroke="#dadada" stroke-width="1" stroke-dasharray="1 1.050"/></svg>
<svg style="left:33.1px;top:270.7px" width="3" height="3" viewBox="0 0 3 3"><path d="M3 0V3H0Z" fill="#b0b0b0"/></svg>
<svg style="left:12.5px;top:280.5px" width="20" height="20" viewBox="0 0 20 20"><path d="M17.800 2.300Q18.600 2.800 17.800 4L11.600 11.800L9.200 9.600L16.600 2.600Q17.300 2 17.800 2.300Z" fill="#dadada"/><path d="M8.400 10.400L10.800 12.600Q11 16 7.400 17Q4.800 17.600 2.600 17.300Q4.600 16 5 14Q5.600 10.800 8.400 10.400Z" fill="#dadada"/></svg>
<svg style="left:33.1px;top:297.2px" width="3" height="3" viewBox="0 0 3 3"><path d="M3 0V3H0Z" fill="#b0b0b0"/></svg>
<svg style="left:12.5px;top:307px" width="20" height="20" viewBox="0 0 20 20"><path d="M10 2.2a3.3 3.3 0 0 1 2.4 5.6Q11.6 9 12 11h4.4v3.2H3.6V11H8Q8.400 9 7.600 7.800A3.300 3.300 0 0 1 10 2.200Z" fill="#dadada"/><rect x="3.600" y="15.600" width="12.800" height="1.600" fill="#dadada"/></svg>
<svg style="left:33.1px;top:323.7px" width="3" height="3" viewBox="0 0 3 3"><path d="M3 0V3H0Z" fill="#b0b0b0"/></svg>
<svg style="left:12.5px;top:333px" width="20" height="20" viewBox="0 0 20 20"><path d="M17.8 3Q19 3.600 18.200 5L12.400 13.400L10 11.600L16.200 3.600Q17 2.600 17.800 3Z" fill="#dadada"/><path d="M9.400 12.400L11.600 14.200Q11.200 17.400 7.600 17.800Q5.600 18 4.200 17.600Q6.400 16.400 6.600 14.600Q7 12.600 9.400 12.400Z" fill="#dadada"/><path d="M2.400 7.400L5.600 4.200V6.200Q9 5.600 11.400 6.600Q8.600 6.800 5.600 8V10Z" fill="#dadada"/><path d="M15.400 9.800Q17.400 13.400 13.600 16.600" fill="none" stroke="#dadada" stroke-width="0.900" stroke-dasharray="1 1"/></svg>
<svg style="left:33.1px;top:349.7px" width="3" height="3" viewBox="0 0 3 3"><path d="M3 0V3H0Z" fill="#b0b0b0"/></svg>
<svg style="left:12.5px;top:358.5px" width="20" height="20" viewBox="0 0 20 20"><path d="M12 3.200L17.800 6.400L11.800 12.800L6 9.600Z" fill="#dadada"/><path d="M6 9.600L3.600 12.400L8 15.600H10L11.800 12.800" fill="none" stroke="#dadada" stroke-width="1.200" stroke-linejoin="round"/><path d="M8 15.800H18.200" stroke="#dadada" stroke-width="1.200"/></svg>
<svg style="left:33.1px;top:375.2px" width="3" height="3" viewBox="0 0 3 3"><path d="M3 0V3H0Z" fill="#b0b0b0"/></svg>
<svg style="left:14.5px;top:386.5px" width="17" height="14" viewBox="0 0 17 14"><defs><linearGradient id="tg" x1="0" x2="1" y1="0" y2="0"><stop offset="0" stop-color="#222"/><stop offset="1" stop-color="#e4e4e4"/></linearGradient></defs><rect x="0.600" y="0.600" width="15.800" height="12.800" fill="url(#tg)" stroke="#dadada" stroke-width="1.200"/></svg>
<svg style="left:33.1px;top:400.2px" width="3" height="3" viewBox="0 0 3 3"><path d="M3 0V3H0Z" fill="#b0b0b0"/></svg>
<svg style="left:12.5px;top:409.5px" width="20" height="20" viewBox="0 0 20 20"><path d="M10 2.400Q11 5.600 13.600 9.200Q15.600 12.200 14.200 14.800Q12.800 17.400 10 17.400Q7.200 17.400 5.800 14.800Q4.400 12.200 6.400 9.200Q9 5.600 10 2.400Z" fill="#dadada"/></svg>
<svg style="left:33.1px;top:426.2px" width="3" height="3" viewBox="0 0 3 3"><path d="M3 0V3H0Z" fill="#b0b0b0"/></svg>
<svg style="left:12.5px;top:436.5px" width="20" height="20" viewBox="0 0 20 20"><circle cx="12.200" cy="7.600" r="5.200" fill="#dadada"/><path d="M8.600 11.400L3 17" stroke="#dadada" stroke-width="1.800" stroke-linecap="round"/></svg>
<svg style="left:33.1px;top:453.2px" width="3" height="3" viewBox="0 0 3 3"><path d="M3 0V3H0Z" fill="#b0b0b0"/></svg>
<svg style="left:12.5px;top:463px" width="20" height="20" viewBox="0 0 20 20"><path d="M12.400 2L18 6.400L16.200 8.600L10.600 4.200Z" fill="#dadada"/><path d="M10.200 5.200L5 8.400L3.400 17.400L12.400 14.800L15.400 9.400Z" fill="none" stroke="#dadada" stroke-width="1.300" stroke-linejoin="round"/><path d="M3.800 17L9 11.600" stroke="#dadada" stroke-width="1"/><circle cx="9.600" cy="11" r="1.500" fill="none" stroke="#dadada" stroke-width="1"/></svg>
<svg style="left:33.1px;top:479.7px" width="3" height="3" viewBox="0 0 3 3"><path d="M3 0V3H0Z" fill="#b0b0b0"/></svg>
<svg style="left:14px;top:488px" width="20" height="20" viewBox="0 0 20 20"><path d="M4 3H16.400V7H15Q14.800 5 13.400 5H11.400V15Q11.400 16 13.200 16.200V17.400H7.200V16.200Q9 16 9 15V5H7Q5.600 5 5.400 7H4Z" fill="#dadada"/></svg>
<svg style="left:33.1px;top:504.7px" width="3" height="3" viewBox="0 0 3 3"><path d="M3 0V3H0Z" fill="#b0b0b0"/></svg>
<svg style="left:12.5px;top:514px" width="20" height="20" viewBox="0 0 20 20"><path d="M6.400 2L15.600 11.200H11.200L13.800 16.600L11.600 17.600L9.200 12.200L6.400 15.200Z" fill="#101010" stroke="#dadada" stroke-width="1.100" stroke-linejoin="round"/></svg>
<svg style="left:33.1px;top:530.7px" width="3" height="3" viewBox="0 0 3 3"><path d="M3 0V3H0Z" fill="#b0b0b0"/></svg>
<svg style="left:12.5px;top:539.7px" width="20" height="20" viewBox="0 0 20 20"><rect x="2.800" y="4" width="14.600" height="12" rx="3.200" fill="#6b6b6b" stroke="#dadada" stroke-width="1.200"/></svg>
<svg style="left:33.1px;top:556.4000000000001px" width="3" height="3" viewBox="0 0 3 3"><path d="M3 0V3H0Z" fill="#b0b0b0"/></svg>
<svg style="left:12.5px;top:566px" width="20" height="20" viewBox="0 0 20 20"><path d="M6.400 10.400V4.600Q6.400 3.600 7.300 3.600Q8.200 3.600 8.200 4.600V3.200Q8.200 2.200 9.100 2.200Q10 2.200 10 3.200V2.800Q10 1.900 10.900 1.900Q11.800 1.900 11.800 2.800V4Q11.800 3.200 12.700 3.200Q13.600 3.200 13.600 4.200V8.600L15.200 6.600Q16 5.800 16.800 6.400Q17.400 7 16.800 8L14.400 14Q13.400 18 9.800 18Q6.600 18 5.400 15.400L2.600 9.800Q2.400 8.800 3.200 8.500Q4 8.300 4.600 9Z" fill="#dadada"/></svg>
<svg style="left:33.1px;top:582.7px" width="3" height="3" viewBox="0 0 3 3"><path d="M3 0V3H0Z" fill="#b0b0b0"/></svg>
<svg style="left:12.5px;top:590px" width="20" height="20" viewBox="0 0 20 20"><circle cx="8.400" cy="8" r="5.600" fill="none" stroke="#dadada" stroke-width="1.500"/><path d="M12.600 12.400L18 17.800" stroke="#dadada" stroke-width="2" stroke-linecap="round"/><path d="M8.200 4.400Q11 4.400 11.800 7" fill="none" stroke="#dadada" stroke-width="0.900"/></svg>
<svg style="left:14px;top:625px" width="18" height="6" viewBox="0 0 18 6"><circle cx="3" cy="3" r="1.900" fill="#dadada"/><circle cx="9" cy="3" r="1.900" fill="#dadada"/><circle cx="15" cy="3" r="1.900" fill="#dadada"/></svg>
<svg style="left:33.1px;top:634.2px" width="3" height="3" viewBox="0 0 3 3"><path d="M3 0V3H0Z" fill="#b0b0b0"/></svg>
<div class="a" style="left:11.500px;top:650.500px;width:7px;height:7px;background:#e0e0e0"></div>
<div class="a" style="left:8px;top:647px;width:7.500px;height:7.500px;background:#0a0a0a;border:1px solid #e0e0e0"></div>
<svg style="left:25.500px;top:645.500px" width="11" height="11" viewBox="0 0 11 11"><path d="M0.500 3.200L3.400 0.400V2.400H8.600V7.600H10.600L7.800 10.600L5 7.600H7V4H3.400V6Z" fill="#dadada"/></svg>
<div class="a" style="left:18.300px;top:672.200px;width:19.400px;height:19.200px;background:#fff;border:1px solid #2e2e2e"></div>
<div class="a" style="left:8.300px;top:662.600px;width:19.400px;height:19.200px;background:#fdfdfd;border:1px solid #2e2e2e"></div>
<svg style="left:14px;top:703px" width="18" height="14" viewBox="0 0 18 14"><rect x="0.500" y="0.500" width="17" height="13" fill="none" stroke="#dadada" stroke-width="1.100"/><circle cx="9" cy="7" r="3.900" fill="none" stroke="#dadada" stroke-width="1.300" stroke-dasharray="1.020 1.430"/></svg>
<svg style="left:14px;top:729px" width="18" height="14" viewBox="0 0 18 14"><rect x="0.500" y="4.500" width="11" height="8" fill="none" stroke="#dadada" stroke-width="1.100"/><rect x="5.500" y="0.500" width="11" height="8" fill="#535353" stroke="#dadada" stroke-width="1.100"/><rect x="5" y="0" width="12" height="1.800" fill="#dadada"/></svg>
<svg style="left:33.1px;top:743.7px" width="3" height="3" viewBox="0 0 3 3"><path d="M3 0V3H0Z" fill="#b0b0b0"/></svg>
<div class="p" style="left:1246px;top:67px;width:38px;height:865px"></div>
<div class="d" style="left:1246px;top:67px;width:38px;height:11px"></div>
<svg style="left:1270px;top:70px" width="8" height="5" viewBox="0 0 8 5"><path d="M3 0L0.400 2.500L3 5ZM6.700 0L4.100 2.500L6.700 5Z" fill="#c6c6c6"/></svg>
<div class="a" style="left:1255px;top:82px;width:19px;height:3px;background:repeating-linear-gradient(90deg,#6e6e6e 0 1px,transparent 1px 2px)"></div>
<div class="a" style="left:1251px;top:90.500px;width:27px;height:22.500px;background:#363636;border-radius:3px;box-shadow:0 0 0 1px #5a5a5a"></div>
<svg style="left:1257px;top:94px" width="18" height="17" viewBox="0 0 18 17"><rect x="2.500" y="0.700" width="4" height="3.600" fill="#2a2a2a" stroke="#e0e0e0" stroke-width="1"/><rect x="2.500" y="6.800" width="4" height="3.600" fill="#2a2a2a" stroke="#e0e0e0" stroke-width="1"/><rect x="2" y="12.200" width="5" height="4.500" fill="#e0e0e0"/><path d="M14.300 4.500Q16.400 10.800 10.800 15" fill="none" stroke="#e0e0e0" stroke-width="1.900"/><path d="M8.900 4L15.800 1L15.400 7.400Z" fill="#e0e0e0"/></svg>
<div class="a" style="left:1246px;top:119px;width:38px;height:1px;background:#3e3e3e"></div>
<div class="a" style="left:1255px;top:123.5px;width:19px;height:3px;background:repeating-linear-gradient(90deg,#6e6e6e 0 1px,transparent 1px 2px)"></div>
<svg style="left:1254px;top:135px" width="22" height="18" viewBox="0 0 22 18"><path d="M1 1.100H3M4 1.100H8M1 4.100H3M4 4.100H8M1 7.100H3M4 7.100H8" stroke="#d8d8d8" stroke-width="1.400"/><path d="M20.600 2.600Q21.600 3.200 20.800 4.300L14.300 11.200L12.300 9.400L19.400 3Q20 2.300 20.600 2.600Z" fill="#d8d8d8"/><path d="M11.500 10L13.600 11.900Q13.400 15.200 9.800 16Q7.400 16.500 4.800 16.300Q7.200 15 7.800 13.200Q8.600 10.400 11.500 10Z" fill="#d8d8d8"/></svg>
<svg style="left:1255px;top:163px" width="21" height="18" viewBox="0 0 21 18"><path d="M10.300 3.900H19.900M2.200 12.100H11.900" stroke="#d8d8d8" stroke-width="2"/><path d="M0.300 2.400Q3 0.800 5.600 1.100Q8.800 1.500 9.200 3.900Q8.800 6.300 5.600 6.700Q2.600 6.800 0.300 2.400Z" fill="#d8d8d8"/><path d="M12.900 12.100L18.200 7.400Q20.200 9.600 20.200 12.100Q20.200 14.800 18.200 16.800Z" fill="#d8d8d8"/></svg>
<div class="a" style="left:1246px;top:188px;width:38px;height:1px;background:#3e3e3e"></div>
<div class="a" style="left:1255px;top:192.5px;width:19px;height:3px;background:repeating-linear-gradient(90deg,#6e6e6e 0 1px,transparent 1px 2px)"></div>
<div class="a" style="left:1258px;top:201px;font-size:19px;line-height:22px;color:#dedede;font-family:'Liberation Sans',sans-serif">A</div>
<div class="a" style="left:1272.500px;top:203px;width:1.200px;height:19px;background:#dedede"></div>
<svg style="left:1259px;top:233px" width="13" height="16" viewBox="0 0 13 16"><path d="M12.500 0.500V2H11.300V15.500H9.800V2H8V15.500H6.500V8.800Q0.800 8.800 0.800 4.600Q0.800 0.500 6 0.500Z" fill="#dedede"/></svg>
<div class="a" style="left:1246px;top:257px;width:38px;height:1px;background:#3e3e3e"></div>
<div class="d" style="left:1286px;top:67px;width:302.300px;height:11px"></div>
<svg style="left:1574px;top:70px" width="8" height="5" viewBox="0 0 8 5"><path d="M0.300 0L2.900 2.500L0.300 5ZM4 0L6.600 2.500L4 5Z" fill="#c6c6c6"/></svg>
<div class="d" style="left:1286px;top:79px;width:302.300px;height:28px"></div>
<div class="p" style="left:1286px;top:79px;width:43.500px;height:29px"></div>
<div class="a" style="left:1372.500px;top:79px;width:1px;height:27px;background:#393939"></div>
<div class="t" style="left:1295px;top:85px;color:#ebebeb">颜色</div>
<div class="t" style="left:1338.500px;top:85px;color:#a0a0a0">色板</div>
<svg style="left:1572px;top:88.5px" width="10" height="8" viewBox="0 0 10 8"><path d="M0 0.6H10M0 2.9H10M0 5.200H10M0 7.500H10" stroke="#c4c4c4" stroke-width="1" fill="none"/></svg>
<div class="p" style="left:1286px;top:108px;width:302.300px;height:246px"></div>
<div class="a" style="left:1305.200px;top:127.500px;width:19.600px;height:19.400px;background:#fff;border:1px solid #2b2b2b"></div>
<div class="a" style="left:1295px;top:117px;width:20px;height:20px;background:#fcfcfc;border:1px solid #2b2b2b;box-shadow:0 0 0 1px #8c8c8c"></div>
<div class="a" style="left:1330.500px;top:113.500px;width:206px;height:232.500px;background:linear-gradient(to top,#000,rgba(0,0,0,0)),linear-gradient(to right,#fff,#f00);box-shadow:0 0 0 1px #3e3e3e"></div>
<div class="a" style="left:1326px;top:112.500px;width:10px;height:10px;border-radius:50%;background:#fff;border:1px solid #222;clip-path:inset(1px 0 0 4.500px)"></div>
<div class="a" style="left:1552.500px;top:113.500px;width:20px;height:232.500px;background:linear-gradient(to bottom,#f00 0%,#f0f 16.700%,#00f 33.300%,#0ff 50%,#0f0 66.700%,#ff0 83.300%,#f00 100%);box-shadow:0 0 0 1px #3e3e3e"></div>
<svg style="left:1543px;top:340.500px" width="8" height="9" viewBox="0 0 8 9"><path d="M0.500 1H4L7.500 4.500L4 8H0.500Z" fill="#e8e8e8" stroke="#222" stroke-width="0.800"/></svg>
<div class="d" style="left:1286px;top:356px;width:302.300px;height:27px"></div>
<div class="p" style="left:1286px;top:356px;width:44px;height:28px"></div>
<div class="a" style="left:1374px;top:356px;width:1px;height:26px;background:#393939"></div>
<div class="t" style="left:1295px;top:361px;color:#ebebeb">属性</div>
<div class="t" style="left:1339px;top:361px;color:#a0a0a0">调整</div>
<svg style="left:1572px;top:364.5px" width="10" height="8" viewBox="0 0 10 8"><path d="M0 0.6H10M0 2.9H10M0 5.200H10M0 7.500H10" stroke="#c4c4c4" stroke-width="1" fill="none"/></svg>
<div class="p" style="left:1286px;top:384px;width:302.300px;height:262px"></div>
<div class="a" style="left:1286px;top:416px;width:302.300px;height:1px;background:#404040"></div>
<div class="a" style="left:1573.300px;top:417px;width:14.500px;height:204px;background:#4b4b4b"></div>
<div class="a" style="left:1296.500px;top:388.500px;width:23px;height:23px;background:#383838;border-radius:3px;box-shadow:0 0 0 1px #5a5a5a"></div>
<svg style="left:1301px;top:394px" width="15" height="12" viewBox="0 0 15 12"><rect x="0.600" y="0.600" width="13.800" height="10.800" fill="none" stroke="#dcdcdc" stroke-width="1.200"/><path d="M1.800 10.400V8L4 5.600L5.600 7.200L8 3.800L10 6.400L11.200 5.400L13.200 8V10.400Z" fill="#dcdcdc"/></svg>
<div class="t" style="left:1326px;top:393px;color:#ececec">像素图层属性</div>
<div class="t" style="left:1297px;top:429px;color:#cfcfcf">W:</div>
<div class="a" style="left:1317.5px;top:427.5px;width:61px;height:18px;background:#454545;border:1px solid #686868"></div>
<div class="t" style="left:1319.0px;top:428.5px;color:#f0f0f0;letter-spacing:-0.300px">0.93 英寸</div>
<div class="a" style="left:1386.500px;top:424px;width:25px;height:25px;background:#383838;border-radius:3px;box-shadow:0 0 0 1px #5a5a5a"></div>
<svg style="left:1392px;top:431px" width="14" height="9" viewBox="0 0 14 9" fill="none" stroke="#c8c8c8" stroke-width="1.400"><path d="M6 6.800Q5.400 7.600 3.800 7.600Q0.800 7.400 0.800 4.500Q0.800 1.600 3.800 1.400Q5.400 1.400 6 2.200"/><path d="M8 2.200Q8.600 1.400 10.200 1.400Q13.200 1.600 13.200 4.500Q13.200 7.400 10.200 7.600Q8.600 7.600 8 6.800"/><path d="M3.800 4.500H10.200"/></svg>
<div class="t" style="left:1423.500px;top:429px;color:#cfcfcf">H:</div>
<div class="a" style="left:1440px;top:427.5px;width:62px;height:18px;background:#454545;border:1px solid #686868"></div>
<div class="t" style="left:1441.5px;top:428.5px;color:#f0f0f0;letter-spacing:-0.300px">22.22 英寸</div>
<div class="t" style="left:1301.500px;top:456px;color:#cfcfcf">X:</div>
<div class="a" style="left:1317.5px;top:454.5px;width:61px;height:18px;background:#454545;border:1px solid #686868"></div>
<div class="t" style="left:1319.0px;top:455.5px;color:#f0f0f0;letter-spacing:-0.300px">2.35 厘米</div>
<div class="t" style="left:1424px;top:456px;color:#cfcfcf">Y:</div>
<div class="a" style="left:1439px;top:454.5px;width:62px;height:18px;background:#454545;border:1px solid #686868"></div>
<div class="t" style="left:1440.5px;top:455.5px;color:#f0f0f0;letter-spacing:-0.300px">0 厘米</div>
<div class="d" style="left:1286px;top:648.500px;width:302.300px;height:28px"></div>
<div class="p" style="left:1286px;top:648.500px;width:44px;height:29.500px"></div>
<div class="a" style="left:1374px;top:648.500px;width:1px;height:27.500px;background:#393939"></div>
<div class="a" style="left:1419px;top:648.500px;width:1px;height:27.500px;background:#393939"></div>
<div class="t" style="left:1295px;top:655px;color:#ebebeb">图层</div>
<div class="t" style="left:1339px;top:655px;color:#a0a0a0">通道</div>
<div class="t" style="left:1384px;top:655px;color:#a0a0a0">路径</div>
<svg style="left:1572px;top:658.5px" width="10" height="8" viewBox="0 0 10 8"><path d="M0 0.6H10M0 2.9H10M0 5.200H10M0 7.500H10" stroke="#c4c4c4" stroke-width="1" fill="none"/></svg>
<div class="p" style="left:1286px;top:678px;width:302.300px;height:254px"></div>
<div class="a" style="left:1286px;top:707.8px;width:302.300px;height:1px;background:#434343"></div>
<div class="a" style="left:1286px;top:735px;width:302.300px;height:1px;background:#434343"></div>
<div class="a" style="left:1289.500px;top:684.500px;width:87px;height:19.500px;background:#454545;border:1px solid #636363;border-radius:3px"></div>
<svg style="left:1297px;top:688px" width="11" height="12" viewBox="0 0 11 12"><circle cx="6.400" cy="4.400" r="3.300" fill="none" stroke="#d8d8d8" stroke-width="1.300"/><path d="M4.200 7L1 11" stroke="#d8d8d8" stroke-width="1.600" stroke-linecap="round"/></svg>
<div class="t" style="left:1313px;top:686.500px;color:#ececec">类型</div>
<svg style="left:1365px;top:692px" width="8" height="5" viewBox="0 0 8 5"><path d="M0.5 0.5L4.0 4.3L7.5 0.5" stroke="#cfcfcf" stroke-width="1.2" fill="none"/></svg>
<svg style="left:1392px;top:688px" width="13" height="11" viewBox="0 0 13 11"><rect x="0.600" y="0.600" width="11.800" height="9.800" fill="none" stroke="#d4d4d4" stroke-width="1.100"/><path d="M2 9V7.600L4 5.400L5.400 6.800L7.200 4.400L9 6.600L10 5.800L11 7.400V9Z" fill="#d4d4d4"/></svg>
<svg style="left:1417px;top:688px" width="12" height="12" viewBox="0 0 12 12"><circle cx="6" cy="6" r="5.200" fill="none" stroke="#d4d4d4" stroke-width="1.100"/><path d="M9.700 2.300A5.200 5.200 0 0 1 2.300 9.700Z" fill="#d4d4d4"/></svg>
<svg style="left:1442px;top:689px" width="11" height="10" viewBox="0 0 11 10"><path d="M0.400 0.300H10.600V3.200H9.600Q9.400 1.600 8.200 1.600H6.700V8Q6.700 8.800 8 8.900V9.800H3V8.900Q4.300 8.800 4.300 8V1.600H2.800Q1.600 1.600 1.400 3.200H0.400Z" fill="#d4d4d4"/></svg>
<svg style="left:1464.500px;top:688px" width="13" height="12" viewBox="0 0 13 12"><rect x="2" y="1.800" width="9" height="8.400" fill="none" stroke="#d4d4d4" stroke-width="1.100"/><rect x="0.300" y="0.200" width="3" height="3" fill="#d4d4d4"/><rect x="9.700" y="0.200" width="3" height="3" fill="#d4d4d4"/><rect x="0.300" y="8.800" width="3" height="3" fill="#d4d4d4"/><rect x="9.700" y="8.800" width="3" height="3" fill="#d4d4d4"/></svg>
<svg style="left:1489.500px;top:688px" width="11" height="12" viewBox="0 0 11 12"><path d="M3.200 5V0.600H7.800L10.400 3.200V11.400H5.600" fill="none" stroke="#d4d4d4" stroke-width="1.100"/><path d="M7.400 0.600V3.600H10.400" fill="none" stroke="#d4d4d4" stroke-width="1"/><rect x="0.200" y="6" width="5" height="5.600" fill="#d4d4d4"/></svg>
<div class="a" style="left:1517.500px;top:686px;width:9px;height:18px;border-radius:4.500px;background:#494949;border:1px solid #404040"></div>
<div class="a" style="left:1518px;top:685.500px;width:8px;height:8px;border-radius:50%;background:#d8d8d8"></div>
<div class="a" style="left:1289.500px;top:711.800px;width:118px;height:19.500px;background:#454545;border:1px solid #636363;border-radius:3px"></div>
<div class="t" style="left:1299px;top:714px;color:#ececec">正常</div>
<svg style="left:1396px;top:719.5px" width="8" height="5" viewBox="0 0 8 5"><path d="M0.5 0.5L4.0 4.3L7.5 0.5" stroke="#cfcfcf" stroke-width="1.2" fill="none"/></svg>
<div class="t" style="left:1415.500px;top:714px;color:#dedede">不透明度:</div>
<div class="a" style="left:1471.500px;top:711.8px;width:55px;height:19.500px;background:#454545;border:1px solid #636363;border-radius:3px"></div>
<div class="a" style="left:1510px;top:711.8px;width:1px;height:19px;background:#636363"></div>
<div class="t" style="left:1474.500px;top:713.3px;color:#f0f0f0;letter-spacing:-0.500px">100%</div>
<svg style="left:1514.5px;top:718.8px" width="8" height="5" viewBox="0 0 8 5"><path d="M0.5 0.5L4.0 4.3L7.5 0.5" stroke="#cfcfcf" stroke-width="1.2" fill="none"/></svg>
<div class="t" style="left:1292px;top:741px;color:#dedede">锁定:</div>
<svg style="left:1329.500px;top:742.500px" width="12" height="12" viewBox="0 0 12 12"><rect x="0.500" y="0.500" width="11" height="11" fill="none" stroke="#d4d4d4" stroke-width="1"/><path d="M1 1H4.300V4.300H1ZM7.700 1H11V4.300H7.700ZM4.300 4.300H7.700V7.700H4.300ZM1 7.700H4.300V11H1ZM7.700 7.700H11V11H7.700Z" fill="#d4d4d4"/></svg>
<svg style="left:1350.500px;top:741.500px" width="14" height="14" viewBox="0 0 14 14"><path d="M12.600 0.600Q13.600 1.200 12.900 2.400L7.400 9.400L5.400 7.800L11.200 1Q11.900 0.200 12.600 0.600Z" fill="#d4d4d4"/><path d="M4.800 8.500L6.800 10.100Q6.600 13 3.600 13.400Q1.800 13.600 0.400 13.200Q2.400 12 2.600 10.600Q2.800 8.700 4.800 8.500Z" fill="#d4d4d4"/></svg>
<svg style="left:1372.500px;top:742px" width="14" height="14" viewBox="0 0 14 14"><path d="M7 0.500L9.200 3H7.600V6.400H11V4.800L13.500 7L11 9.200V7.600H7.600V11H9.200L7 13.500L4.800 11H6.400V7.600H3V9.200L0.500 7L3 4.800V6.400H6.400V3H4.800Z" fill="#d4d4d4"/></svg>
<svg style="left:1394.500px;top:742px" width="15" height="14" viewBox="0 0 15 14"><path d="M3 0V13M0 3H10.400V10.400M12 3V13M2 10.400H14" stroke="#d4d4d4" stroke-width="1.200" fill="none" stroke-dasharray="7 0"/><path d="M10.400 0.600L13.400 3.400" stroke="#d4d4d4" stroke-width="1" stroke-dasharray="1 1"/></svg>
<svg style="left:1418.500px;top:741.500px" width="11" height="14" viewBox="0 0 11 14"><path d="M2.600 6V4Q2.600 1 5.500 1Q8.400 1 8.400 4V6" fill="none" stroke="#d4d4d4" stroke-width="1.500"/><rect x="0.400" y="5.800" width="10.200" height="7.600" rx="0.800" fill="#d4d4d4"/><circle cx="5.500" cy="9.400" r="1.200" fill="#535353"/></svg>
<div class="t" style="left:1440px;top:741px;color:#dedede">填充:</div>
<div class="a" style="left:1471.500px;top:738.8px;width:55px;height:19.500px;background:#454545;border:1px solid #636363;border-radius:3px"></div>
<div class="a" style="left:1510px;top:738.8px;width:1px;height:19px;background:#636363"></div>
<div class="t" style="left:1474.500px;top:740.3px;color:#f0f0f0;letter-spacing:-0.500px">100%</div>
<svg style="left:1514.5px;top:745.8px" width="8" height="5" viewBox="0 0 8 5"><path d="M0.5 0.5L4.0 4.3L7.5 0.5" stroke="#cfcfcf" stroke-width="1.2" fill="none"/></svg>
<div class="a" style="left:1286px;top:762.500px;width:287px;height:1px;background:#434343"></div>
<div class="a" style="left:1573px;top:763px;width:15.300px;height:143.500px;background:#4d4d4d"></div>
<div class="a" style="left:1316px;top:763px;width:1px;height:144px;background:#434343"></div>
<div class="a" style="left:1286px;top:786px;width:287px;height:1px;background:#434343"></div>
<svg style="left:1294px;top:770.3px" width="14" height="10" viewBox="0 0 14 10"><path d="M0.300 5Q3.300 0.600 7 0.600Q10.700 0.600 13.700 5Q10.700 9.400 7 9.400Q3.300 9.400 0.300 5Z" fill="#dcdcdc"/><circle cx="7" cy="4.800" r="2.700" fill="#535353"/><circle cx="7" cy="4.800" r="1.200" fill="#dcdcdc"/><circle cx="7.900" cy="4" r="0.800" fill="#535353"/></svg>
<svg style="left:1320px;top:772px" width="9" height="6" viewBox="0 0 9 6"><path d="M0.5 0.5L4.5 5.3L8.5 0.5" stroke="#cfcfcf" stroke-width="1.2" fill="none"/></svg>
<svg style="left:1332px;top:769px" width="14" height="12" viewBox="0 0 14 12"><path d="M0.600 0.600H6L7.200 2.600H13.400V11.400H0.600Z" fill="none" stroke="#d8d8d8" stroke-width="1.200"/><path d="M0.600 2.600H7.200V4H13.400V11.400H0.600Z" fill="#d8d8d8"/></svg>
<div class="t" style="left:1358.500px;top:767.500px;color:#ececec">背景</div>
<div class="a" style="left:1317px;top:787px;width:245px;height:39px;background:#6b6b6b"></div>
<div class="a" style="left:1562px;top:787px;width:11px;height:39px;background:#5f5f5f"></div>
<div class="a" style="left:1286px;top:826px;width:31px;height:1px;background:#434343"></div>
<svg style="left:1294px;top:802px" width="14" height="10" viewBox="0 0 14 10"><path d="M0.300 5Q3.300 0.600 7 0.600Q10.700 0.600 13.700 5Q10.700 9.400 7 9.400Q3.300 9.400 0.300 5Z" fill="#dcdcdc"/><circle cx="7" cy="4.800" r="2.700" fill="#535353"/><circle cx="7" cy="4.800" r="1.200" fill="#dcdcdc"/><circle cx="7.900" cy="4" r="0.800" fill="#535353"/></svg>
<div class="a" style="left:1336px;top:790px;width:24.500px;height:32px;border:1px solid #1e1e1e;background-color:#fff;background-image:linear-gradient(45deg,#ccc 25%,transparent 25%,transparent 75%,#ccc 75%),linear-gradient(45deg,#ccc 25%,transparent 25%,transparent 75%,#ccc 75%);background-size:7px 7px;background-position:0 0,3.500px 3.500px"></div>
<div class="t" style="left:1369.500px;top:799.500px;color:#f2f2f2">图层 50</div>
<div class="a" style="left:1546.500px;top:798px;font-family:'Liberation Sans',sans-serif;font-style:italic;font-weight:bold;font-size:13px;line-height:16px;color:#dcdcdc;letter-spacing:-0.5px">fx</div>
<svg style="left:1564px;top:804px" width="8" height="5" viewBox="0 0 8 5"><path d="M0.500 4.500L4 1L7.500 4.500" stroke="#cfcfcf" stroke-width="1.100" fill="none"/></svg>
<svg style="left:1351.5px;top:830.6px" width="14" height="10" viewBox="0 0 14 10"><path d="M0.300 5Q3.300 0.600 7 0.600Q10.700 0.600 13.700 5Q10.700 9.400 7 9.400Q3.300 9.400 0.300 5Z" fill="#dcdcdc"/><circle cx="7" cy="4.800" r="2.700" fill="#535353"/><circle cx="7" cy="4.800" r="1.200" fill="#dcdcdc"/><circle cx="7.900" cy="4" r="0.800" fill="#535353"/></svg>
<div class="t" style="left:1370.500px;top:828px;color:#ececec">效果</div>
<svg style="left:1368.5px;top:849.3px" width="14" height="10" viewBox="0 0 14 10"><path d="M0.300 5Q3.300 0.600 7 0.600Q10.700 0.600 13.700 5Q10.700 9.400 7 9.400Q3.300 9.400 0.300 5Z" fill="#dcdcdc"/><circle cx="7" cy="4.800" r="2.700" fill="#535353"/><circle cx="7" cy="4.800" r="1.200" fill="#dcdcdc"/><circle cx="7.900" cy="4" r="0.800" fill="#535353"/></svg>
<div class="t" style="left:1387.500px;top:846.8px;color:#ececec">斜面和浮雕</div>
<svg style="left:1368.5px;top:868.5px" width="14" height="10" viewBox="0 0 14 10"><path d="M0.300 5Q3.300 0.600 7 0.600Q10.700 0.600 13.700 5Q10.700 9.400 7 9.400Q3.300 9.400 0.300 5Z" fill="#dcdcdc"/><circle cx="7" cy="4.800" r="2.700" fill="#535353"/><circle cx="7" cy="4.800" r="1.200" fill="#dcdcdc"/><circle cx="7.900" cy="4" r="0.800" fill="#535353"/></svg>
<div class="t" style="left:1387.500px;top:866.0px;color:#ececec">内发光</div>
<svg style="left:1368.5px;top:887.6999999999999px" width="14" height="10" viewBox="0 0 14 10"><path d="M0.300 5Q3.300 0.600 7 0.600Q10.700 0.600 13.700 5Q10.700 9.400 7 9.400Q3.300 9.400 0.300 5Z" fill="#dcdcdc"/><circle cx="7" cy="4.800" r="2.700" fill="#535353"/><circle cx="7" cy="4.800" r="1.200" fill="#dcdcdc"/><circle cx="7.900" cy="4" r="0.800" fill="#535353"/></svg>
<div class="t" style="left:1387.500px;top:885.1999999999999px;color:#ececec">投影</div>
<svg style="left:1577px;top:771.500px" width="8" height="5" viewBox="0 0 8 5"><path d="M0.500 4.500L4 1L7.500 4.500" stroke="#8f8f8f" stroke-width="1.100" fill="none"/></svg>
<svg style="left:1577px;top:893.500px" width="8" height="5" viewBox="0 0 8 5"><path d="M0.500 0.500L4 4L7.500 0.500" stroke="#8f8f8f" stroke-width="1.100" fill="none"/></svg>
<div class="a" style="left:1575px;top:780.500px;width:12px;height:10.500px;background:#6a6a6a"></div>
<div class="a" style="left:1286px;top:901px;width:287px;height:1px;background:#434343"></div>
<div class="a" style="left:1317px;top:902px;width:245px;height:5px;background:#6b6b6b"></div>
<div class="a" style="left:1336px;top:905px;width:24.500px;height:2px;background:#262626"></div>
<div class="a" style="left:1286px;top:906.500px;width:302.300px;height:1px;background:#3c3c3c"></div>
<div class="p" style="left:1286px;top:907.500px;width:302.300px;height:24px"></div>
<svg style="left:1385px;top:914px" width="14" height="9" viewBox="0 0 14 9" fill="none" stroke="#d0d0d0" stroke-width="1.400"><path d="M6 6.800Q5.400 7.600 3.800 7.600Q0.800 7.400 0.800 4.500Q0.800 1.600 3.800 1.400Q5.400 1.400 6 2.200"/><path d="M8 2.200Q8.600 1.400 10.200 1.400Q13.200 1.600 13.200 4.500Q13.200 7.400 10.200 7.600Q8.600 7.600 8 6.800"/><path d="M3.800 4.500H10.200"/></svg>
<div class="a" style="left:1413px;top:909px;font-family:'Liberation Sans',sans-serif;font-style:italic;font-weight:bold;font-size:14px;line-height:16px;color:#8e8e8e;letter-spacing:-0.5px">fx</div>
<svg style="left:1439px;top:913px" width="14" height="11" viewBox="0 0 14 11"><rect x="0" y="0" width="14" height="11" fill="#8a8a8a"/><circle cx="7" cy="5.500" r="3" fill="#535353"/></svg>
<svg style="left:1467px;top:912px" width="13" height="13" viewBox="0 0 13 13"><circle cx="6.500" cy="6.500" r="5.600" fill="none" stroke="#d4d4d4" stroke-width="1.200"/><path d="M10.500 2.500A5.600 5.600 0 0 1 2.500 10.500Z" fill="#d4d4d4"/></svg>
<svg style="left:1480px;top:926px" width="5" height="3" viewBox="0 0 5 3"><path d="M0 0H5L2.500 3Z" fill="#e0e0e0"/></svg>
<svg style="left:1493px;top:912px" width="14" height="12" viewBox="0 0 14 12"><path d="M0.500 0.500H5.600L6.800 2.200H13.500V11.500H0.500Z" fill="#d4d4d4"/></svg>
<svg style="left:1521px;top:912px" width="12" height="12" viewBox="0 0 12 12"><path d="M0.600 0.600H11.400V11.400H4.600L0.600 7.400Z" fill="none" stroke="#d4d4d4" stroke-width="1.200"/><path d="M0.600 7.400H4.600V11.400" fill="none" stroke="#d4d4d4" stroke-width="1.200"/></svg>
<svg style="left:1547.5px;top:911px" width="11" height="14" viewBox="0 0 11 14"><path d="M0.300 2.600H10.700M3.500 2.400V0.800H7.500V2.400" stroke="#d4d4d4" stroke-width="1.300" fill="none"/><path d="M1.300 3.800H9.700V13.300H1.300Z" fill="none" stroke="#d4d4d4" stroke-width="1.300"/><path d="M3.900 4.500V12.500M5.500 4.500V12.500M7.100 4.500V12.500" stroke="#d4d4d4" stroke-width="1"/></svg>
<div class="a" style="left:1032.400px;top:76.500px;width:212.600px;height:165.500px;background:#303030"></div>
<div class="d" style="left:1034px;top:80px;width:210px;height:27px"></div>
<div class="p" style="left:1034px;top:80px;width:67px;height:28px"></div>
<div class="t" style="left:1043px;top:86px;color:#e8e8e8">历史记录</div>
<svg style="left:1203px;top:89px" width="10" height="8" viewBox="0 0 10 8"><path d="M0.700 0.700L4 4L0.700 7.300M5.700 0.700L9 4L5.700 7.300" stroke="#d0d0d0" stroke-width="1.300" fill="none"/></svg>
<div class="a" style="left:1220px;top:88px;width:1px;height:11px;background:#8a8a8a"></div>
<svg style="left:1228px;top:89px" width="10" height="8" viewBox="0 0 10 8"><path d="M0 0.6H10M0 2.9H10M0 5.200H10M0 7.500H10" stroke="#c4c4c4" stroke-width="1" fill="none"/></svg>
<div class="p" style="left:1034px;top:108px;width:210px;height:133px"></div>
<div class="a" style="left:1228px;top:113px;width:16px;height:95px;background:#4a4a4a"></div>
<svg style="left:1232px;top:120px" width="8" height="5" viewBox="0 0 8 5"><path d="M0.500 4.500L4 1L7.500 4.500" stroke="#8f8f8f" stroke-width="1.100" fill="none"/></svg>
<svg style="left:1232px;top:195px" width="8" height="5" viewBox="0 0 8 5"><path d="M0.500 0.500L4 4L7.500 0.500" stroke="#8f8f8f" stroke-width="1.100" fill="none"/></svg>
<div class="a" style="left:1230px;top:180px;width:12px;height:12px;background:#6a6a6a"></div>
<div class="a" style="left:1034px;top:116px;width:194px;height:23px;background:#535353;border-top:1px solid #474747"></div>
<div class="a" style="left:1040px;top:122px;width:12px;height:12px;border:1px solid #484848;background:#505050"></div>
<svg style="left:1066px;top:120px" width="14" height="16" viewBox="0 0 14 16"><path d="M0.600 0.600H6.200V2.400H13.400V15.400H0.600Z" fill="#4a4a4a" stroke="#d4d4d4" stroke-width="1.200"/><path d="M3 5.500H11M3 8H11M3 10.500H11M3 13H11" stroke="#d4d4d4" stroke-width="1.200"/></svg>
<div class="t" style="left:1093px;top:120px;color:#ececec">名称更改</div>
<div class="a" style="left:1034px;top:139px;width:194px;height:23px;background:#535353;border-top:1px solid #474747"></div>
<div class="a" style="left:1040px;top:145px;width:12px;height:12px;border:1px solid #484848;background:#505050"></div>
<svg style="left:1066px;top:143px" width="14" height="16" viewBox="0 0 14 16"><path d="M0.600 0.600H6.200V2.400H13.400V15.400H0.600Z" fill="#4a4a4a" stroke="#d4d4d4" stroke-width="1.200"/><path d="M3 5.500H11M3 8H11M3 10.500H11M3 13H11" stroke="#d4d4d4" stroke-width="1.200"/></svg>
<div class="t" style="left:1093px;top:143px;color:#ececec">名称更改 (存储)</div>
<div class="a" style="left:1034px;top:162px;width:194px;height:23px;background:#535353;border-top:1px solid #474747"></div>
<div class="a" style="left:1040px;top:168px;width:12px;height:12px;border:1px solid #484848;background:#505050"></div>
<svg style="left:1066px;top:166px" width="14" height="16" viewBox="0 0 14 16"><path d="M0.600 0.600H6.200V2.400H13.400V15.400H0.600Z" fill="#4a4a4a" stroke="#d4d4d4" stroke-width="1.200"/><path d="M3 5.500H11M3 8H11M3 10.500H11M3 13H11" stroke="#d4d4d4" stroke-width="1.200"/></svg>
<div class="t" style="left:1093px;top:166px;color:#ececec">粘贴样式</div>
<div class="a" style="left:1034px;top:185px;width:194px;height:23px;background:#6b6b6b;border-top:1px solid #474747"></div>
<div class="a" style="left:1040px;top:191px;width:12px;height:12px;border:1px solid #5a5a5a;background:#626262"></div>
<svg style="left:1066px;top:189px" width="14" height="16" viewBox="0 0 14 16"><path d="M0.600 0.600H6.200V2.400H13.400V15.400H0.600Z" fill="#4a4a4a" stroke="#d4d4d4" stroke-width="1.200"/><path d="M3 5.500H11M3 8H11M3 10.500H11M3 13H11" stroke="#d4d4d4" stroke-width="1.200"/></svg>
<div class="t" style="left:1093px;top:189px;color:#ececec">粘贴样式</div>
<div class="a" style="left:1034px;top:208px;width:194px;height:1px;background:#474747"></div>
<svg style="left:1142px;top:214px" width="16" height="14" viewBox="0 0 16 14"><path d="M5.500 0.800H11.400L13.600 3V12.600H5.500Z" fill="none" stroke="#d0d0d0" stroke-width="1.300"/><path d="M10.800 0.800V3.600H13.600" fill="none" stroke="#d0d0d0" stroke-width="1"/><rect x="0" y="6.600" width="9" height="2.800" fill="#d0d0d0" stroke="#535353" stroke-width="0.800"/><rect x="3.100" y="3.500" width="2.800" height="9" fill="#d0d0d0"/></svg>
<svg style="left:1174px;top:215px" width="14" height="12" viewBox="0 0 14 12"><path d="M0.500 2.500H3.500L4.500 0.500H9.500L10.500 2.500H13.500V11.500H0.500Z" fill="#d0d0d0"/><circle cx="7" cy="6.800" r="2.800" fill="#535353"/><circle cx="7" cy="6.800" r="1.300" fill="#d0d0d0"/></svg>
<svg style="left:1204px;top:214px" width="11" height="14" viewBox="0 0 11 14"><path d="M0.300 2.600H10.700M3.500 2.400V0.800H7.500V2.400" stroke="#d0d0d0" stroke-width="1.300" fill="none"/><path d="M1.300 3.800H9.700V13.300H1.300Z" fill="none" stroke="#d0d0d0" stroke-width="1.300"/><path d="M3.900 4.500V12.500M5.500 4.500V12.500M7.100 4.500V12.500" stroke="#d0d0d0" stroke-width="1"/></svg>
<div class="a" style="left:1034px;top:233.500px;width:210px;height:1.500px;background:#3c3c3c"></div>
<div class="a" style="left:1129px;top:236.500px;width:21px;height:3px;background:repeating-linear-gradient(90deg,#6e6e6e 0 1px,transparent 1px 2px)"></div>
<div class="a" style="left:1035px;top:183.500px;width:201px;height:35.500px;border:2px solid #fb0007"></div>
<svg style="left:1015px;top:250px" width="40" height="92" viewBox="0 0 40 92"><path d="M6.500 85.500L31 11.500" stroke="#fb0007" stroke-width="2.300" stroke-linecap="round" fill="none"/><path d="M34 2.200L35.100 13.800L26.300 11.700Z" fill="#fb0007"/></svg>
</body></html>
